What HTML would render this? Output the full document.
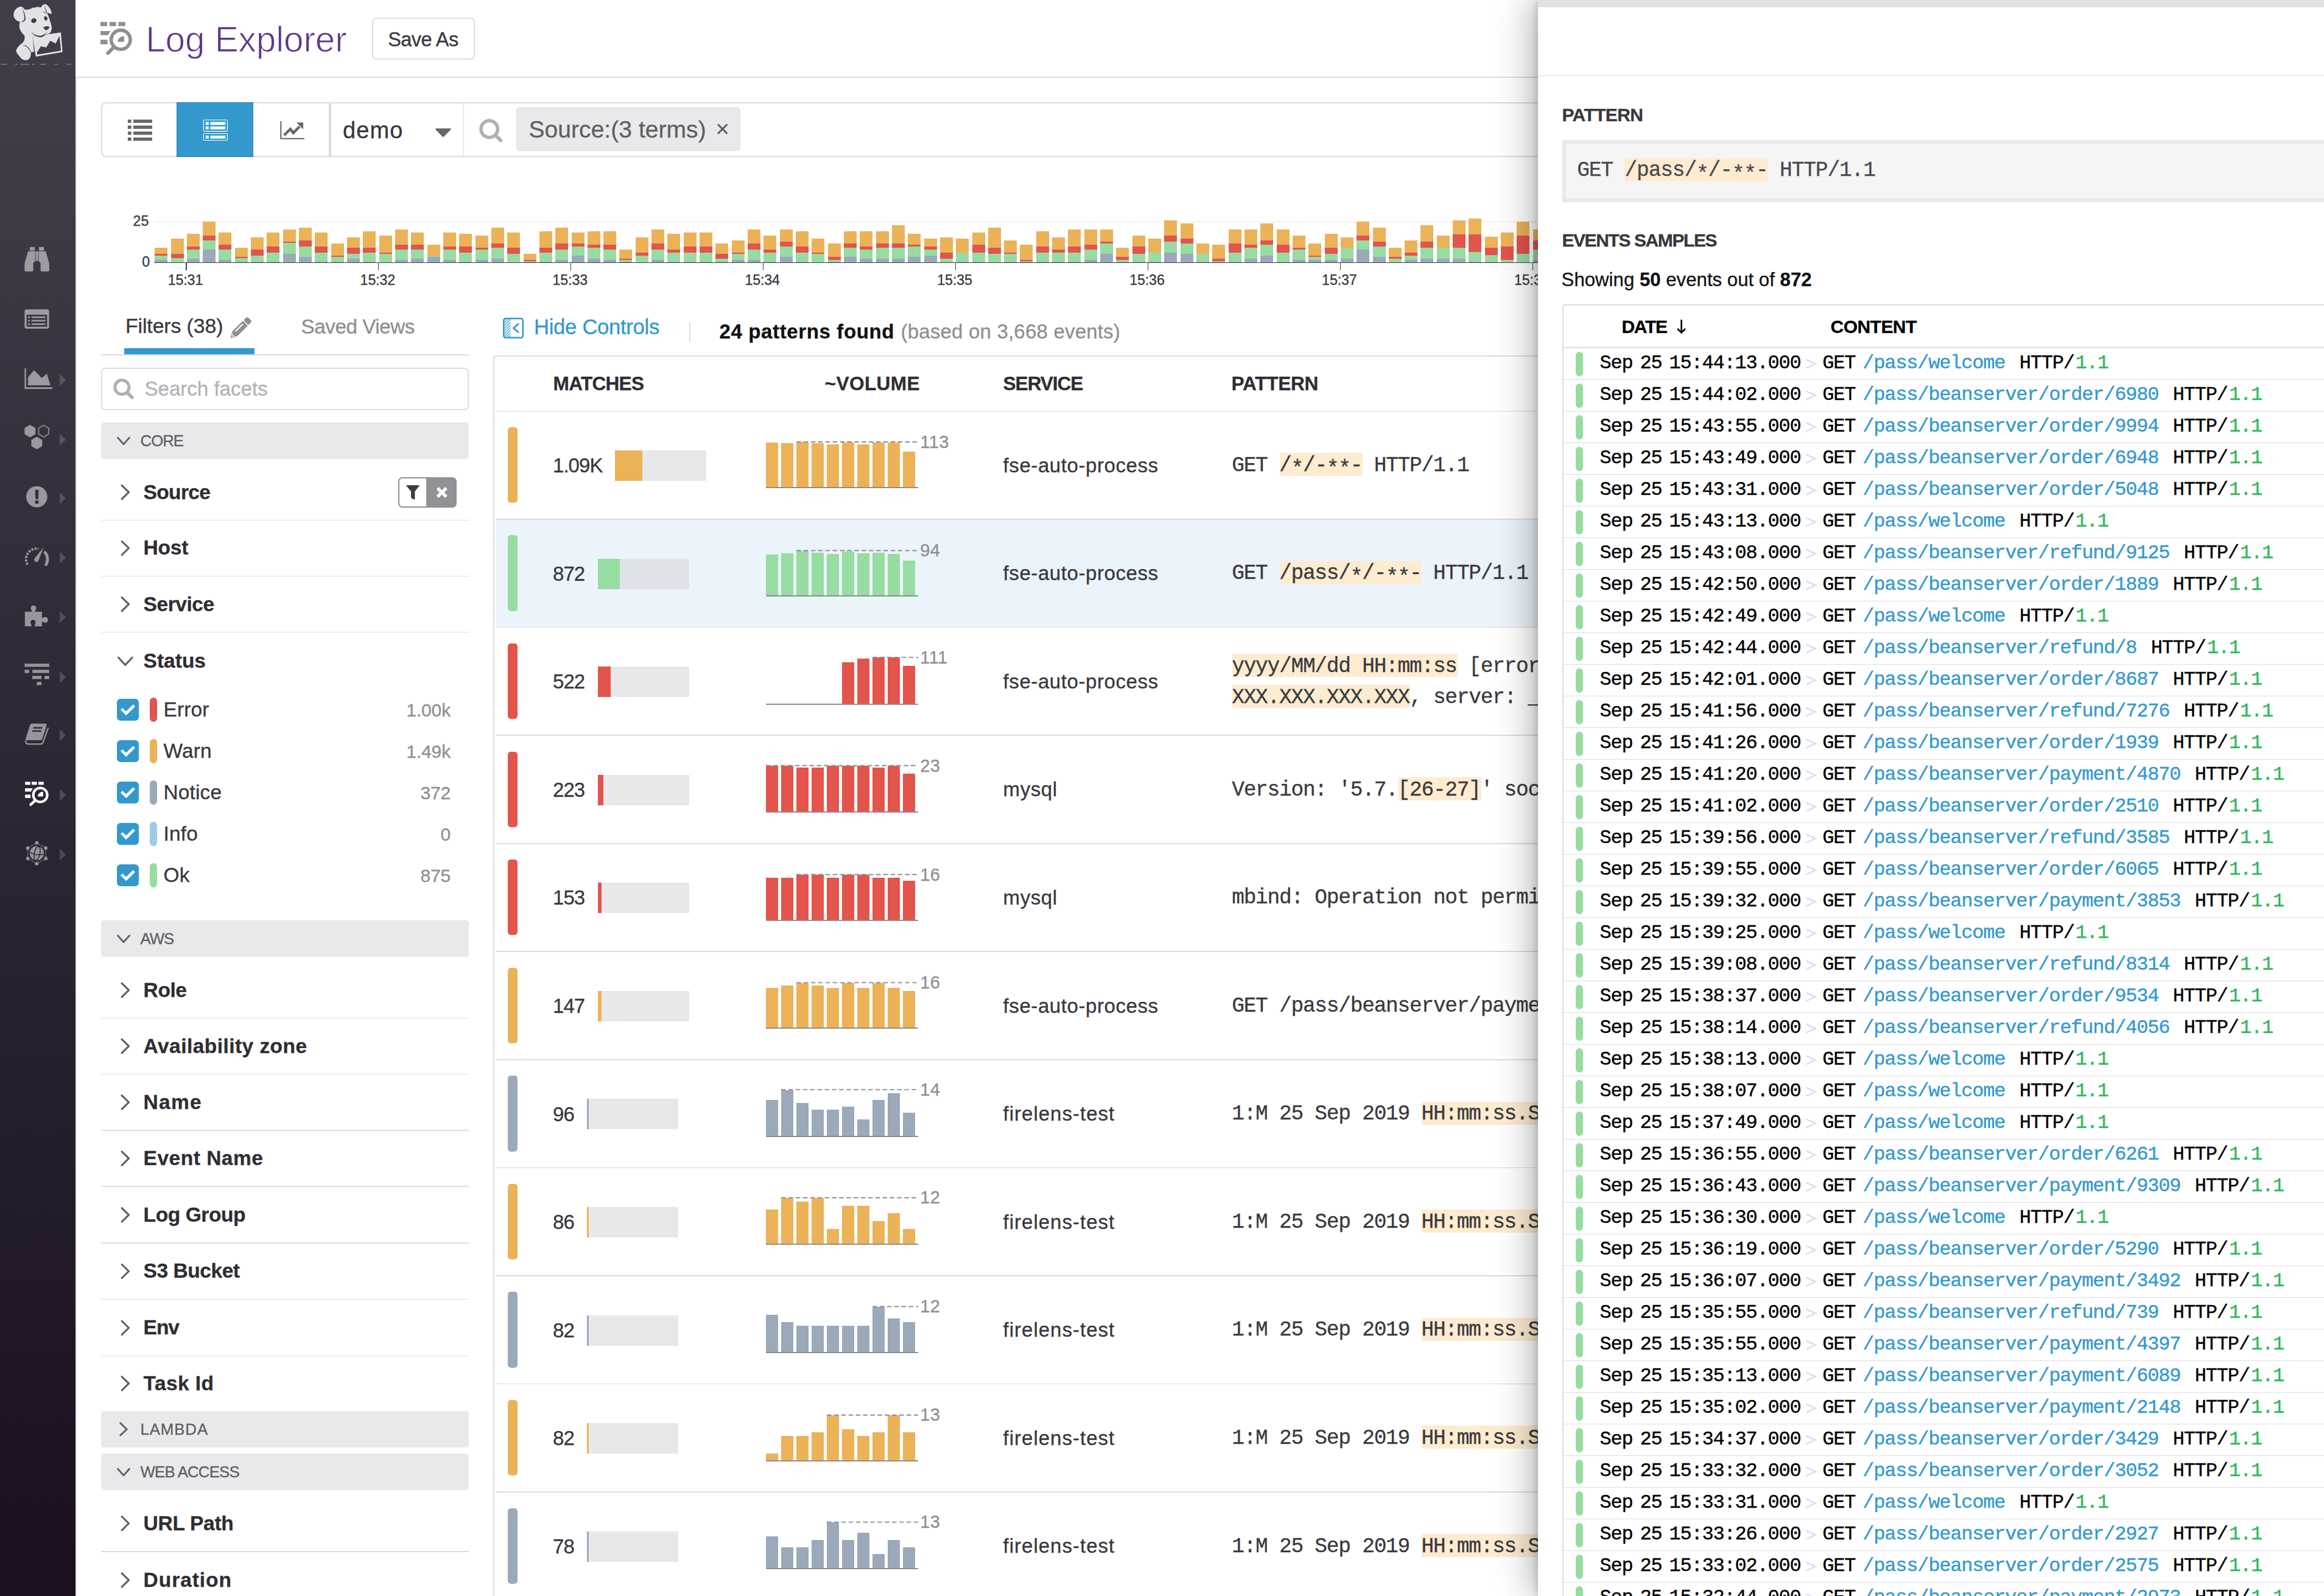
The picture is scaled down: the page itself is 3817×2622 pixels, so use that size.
<!DOCTYPE html>
<html><head><meta charset="utf-8"><title>Log Explorer</title>
<style>
html,body{margin:0;padding:0;}
body{width:3817px;height:2622px;background:#fff;font-family:"Liberation Sans",sans-serif;overflow:hidden;}
#root{position:relative;width:3817px;height:2622px;overflow:hidden;background:#fff;}
.a{position:absolute;box-sizing:border-box;}
.t{position:absolute;white-space:pre;line-height:1;}
.s{font-family:"Liberation Sans",sans-serif;-webkit-text-stroke:0.3px;}
.m{font-family:"Liberation Mono",monospace;}
svg{position:absolute;overflow:visible;}
.hl{background:#fdecd0;}
</style></head><body><div id="root">
<div class="a" style="left:0.00px;top:0.00px;width:124.00px;height:2622.00px;background:linear-gradient(180deg,#433d4a 0%,#3e3744 15%,#352d3b 34%,#2c2332 56%,#231a2a 76%,#1b0f20 100%);"></div>
<svg style="left:0;top:0" width="124" height="130" viewBox="0 0 1200.7 1258.8">
<g fill="#e2e1e4">
<path d="M330 105 C270 112 215 170 215 240 C218 290 262 338 318 347 C306 385 302 425 318 470 C332 512 365 540 388 562 C398 600 392 640 368 672 C330 700 280 742 260 792 C246 832 290 868 320 908 C340 950 400 966 442 952 C482 932 496 882 490 832 L542 822 L516 582 L600 572 C650 588 700 575 745 545 C790 540 818 505 824 452 C822 400 800 340 776 270 L748 205 C770 200 790 222 812 222 C826 215 822 195 812 170 C790 115 750 68 712 62 C680 70 664 100 650 118 C610 108 570 112 545 125 L520 118 L500 135 C460 150 420 160 392 150 C378 128 356 108 330 105 Z"/>
<path d="M515 580 L968 515 L995 828 L570 900 Z"/>
</g>
<g fill="#423c49">
<path d="M590 868 L588 835 L650 735 L735 755 L800 648 L885 692 L945 572 L970 806 Z"/>
<ellipse cx="538" cy="328" rx="43" ry="37" transform="rotate(-22 538 328)"/>
<ellipse cx="728" cy="292" rx="26" ry="34" transform="rotate(-14 728 292)"/>
<path d="M690 436 C705 420 765 412 786 430 C780 455 765 472 735 479 C715 475 697 458 690 436 Z"/>
<path d="M494 498 C530 548 600 575 655 566 C700 555 730 535 748 508 C735 545 700 585 650 592 C590 590 525 560 494 498 Z"/>
<path d="M350 120 C385 180 412 260 405 310 C395 340 365 352 330 350 C365 340 388 315 388 285 C385 230 370 170 350 120 Z"/>
<path d="M704 78 C722 120 738 165 746 196 L735 200 C725 160 712 115 704 78 Z"/>
<path d="M668 178 C690 190 715 205 735 215 L738 205 C715 195 690 182 668 178Z"/>
<path d="M352 712 C420 715 475 760 492 830 L484 832 C465 770 415 728 352 712 Z"/>
<path d="M516 582 L542 822 L530 824 L504 584 Z" opacity="0.0"/>
</g>
</svg>
<div class="a" style="left:2.00px;top:105.00px;width:10.40px;height:1.10px;background:rgba(255,255,255,0.45);"></div>
<div class="a" style="left:24.80px;top:105.00px;width:4.10px;height:1.10px;background:rgba(255,255,255,0.45);"></div>
<div class="a" style="left:34.00px;top:105.00px;width:14.00px;height:1.10px;background:rgba(255,255,255,0.45);"></div>
<div class="a" style="left:53.20px;top:105.00px;width:3.60px;height:1.10px;background:rgba(255,255,255,0.45);"></div>
<div class="a" style="left:66.00px;top:105.00px;width:10.40px;height:1.10px;background:rgba(255,255,255,0.45);"></div>
<div class="a" style="left:89.80px;top:105.00px;width:5.70px;height:1.10px;background:rgba(255,255,255,0.45);"></div>
<div class="a" style="left:109.50px;top:105.00px;width:7.20px;height:1.10px;background:rgba(255,255,255,0.45);"></div>
<svg style="left:0;top:0" width="124" height="1500" viewBox="0 0 124 1500"><g fill="#fff" opacity="0.5"><rect x="49" y="405.8" width="8.2" height="5.9"/><rect x="64" y="405.8" width="8.2" height="5.9"/>
<path d="M46.1 412.8H57.8V428.8L54.6 432.4V444.2Q54.6 446 52.6 446H42.2Q40.3 446 40.3 444.2V433Z"/>
<path d="M75.1 412.8H63.4V428.8L66.6 432.4V444.2Q66.6 446 68.6 446H79Q80.9 446 80.9 444.2V433Z"/>
<rect x="58.6" y="412.8" width="4" height="15.8"/></g><g fill="#fff" opacity="0.5"><path fill-rule="evenodd" d="M43.4 508.2H77.6Q80.6 508.2 80.6 511.2V537Q80.6 540 77.6 540H43.4Q40.4 540 40.4 537V511.2Q40.4 508.2 43.4 508.2ZM43.7 516.9V536.8H77.3V516.9Z"/>
<rect x="46" y="519.8" width="3" height="2.7"/><rect x="51.8" y="519.8" width="22.8" height="2.7"/><rect x="46" y="525.5" width="3" height="2.7"/><rect x="51.8" y="525.5" width="22.8" height="2.7"/><rect x="46" y="531.2" width="3" height="2.7"/><rect x="51.8" y="531.2" width="22.8" height="2.7"/></g><g fill="#fff" opacity="0.5"><path d="M40.4 605.2H42.8V636.2H86V639H40.4Z"/><path d="M46.1 632.9V619.8L55.9 608.1L68.6 621.1L77 614.1L82.8 632.9Z"/></g><path d="M98.2 614.5999999999999L108 624.3L98.2 634.0Z" fill="#fff" opacity="0.17"/><g opacity="0.5"><polygon fill="#fff" points="49.30,697.90 58.22,703.05 58.22,713.35 49.30,718.50 40.38,713.35 40.38,703.05"/><polygon fill="#fff" points="60.40,717.50 69.32,722.65 69.32,732.95 60.40,738.10 51.48,732.95 51.48,722.65"/><polygon fill="none" stroke="#fff" stroke-width="1.5" points="71.80,698.60 80.11,703.40 80.11,713.00 71.80,717.80 63.49,713.00 63.49,703.40"/></g><path d="M98.2 712.5L108 722.2L98.2 731.9000000000001Z" fill="#fff" opacity="0.17"/><g fill="#fff" opacity="0.5"><path fill-rule="evenodd" d="M60.4 798.7A17.4 17.4 0 1 0 60.4 833.5A17.4 17.4 0 1 0 60.4 798.7ZM57.7 804.7H63.5L62.9 819.9H58.3ZM57.8 822.3H63.4V827.5H57.8Z"/></g><path d="M98.2 808.6999999999999L108 818.4L98.2 828.1Z" fill="#fff" opacity="0.17"/><g opacity="0.5" fill="none" stroke="#fff"><path d="M45.16 927.60A17.6 17.6 0 0 1 63.46 901.47" stroke-width="3.8" stroke-dasharray="3.6 1.9"/>
<path d="M73.88 907.49A17.6 17.6 0 0 1 75.64 927.60" stroke-width="4.8" stroke-linecap="round"/>
<path d="M71.6 899 L63.4 920.6 A3.7 3.7 0 1 1 57 917.2 Z" fill="#fff" stroke="none"/></g><path d="M98.2 906.5L108 916.2L98.2 925.9000000000001Z" fill="#fff" opacity="0.17"/><g fill="#fff" opacity="0.5"><path fill-rule="evenodd" d="M40.9 1005H52.2Q53.2 1004.2 52 1002.6A4.5 4.5 0 1 1 58 1002.6Q56.8 1004.2 57.8 1005H68.9V1014.6Q69.8 1015.8 71.6 1014.6A4.6 4.6 0 1 1 71.6 1022.2Q69.8 1021 68.9 1022.2V1029H57.2V1025.6A4.2 4.2 0 1 0 51.4 1025.6V1029H40.9Z"/></g><path d="M98.2 1004.3L108 1014L98.2 1023.7Z" fill="#fff" opacity="0.17"/><g fill="#fff" opacity="0.5"><rect x="40.4" y="1090.3" width="40.4" height="5.2"/><rect x="40.4" y="1100.4" width="7.6" height="5.2"/><rect x="53.1" y="1100.4" width="27.7" height="5.2"/><rect x="53.1" y="1110.3" width="15" height="5.3"/><rect x="73" y="1110.3" width="7.8" height="5.3"/><rect x="60.4" y="1120.3" width="7.7" height="5.4"/></g><path d="M98.2 1102.7L108 1112.4L98.2 1122.1000000000001Z" fill="#fff" opacity="0.17"/><g opacity="0.5"><path fill="#fff" fill-rule="evenodd" d="M52.6 1188.7H74.2Q77.2 1188.9 76.4 1192L69.6 1214Q68.9 1216.1 66.6 1216.1H44.4Q41.4 1216 42.3 1213L49.4 1191Q50.2 1188.7 52.6 1188.7ZM55 1194.6L54.3 1197H69L69.7 1194.6ZM53.4 1199.8L52.7 1202.2H67.4L68.1 1199.8Z"/>
<path fill="none" stroke="#fff" stroke-width="2.3" stroke-linecap="round" d="M42.4 1217Q41.8 1222.4 46.4 1222.4H66.6Q69.6 1222.4 70.6 1219.6L79 1196.4"/></g><path d="M98.2 1198.3L108 1208L98.2 1217.7Z" fill="#fff" opacity="0.17"/><g fill="#fff"><rect x="41.2" y="1284.4" width="8.6" height="4.9"/><rect x="52.1" y="1284.4" width="8.6" height="4.9"/><rect x="63.2" y="1284.4" width="8.6" height="4.9"/>
<path d="M41.2 1295H53.8L50.8 1300.4H41.2Z"/><path d="M41.2 1305.6H49.9L50.4 1310.9H41.2Z"/>
<path d="M70.8 1308.6V1300.8A8.4 7.8 0 0 0 62 1308.6Z"/></g>
<circle cx="66.1" cy="1306" r="11.5" fill="none" stroke="#fff" stroke-width="4.2"/>
<path d="M57 1315.8L50.4 1321.8" stroke="#fff" stroke-width="4.4" stroke-linecap="round"/><path d="M98.2 1296.3L108 1306L98.2 1315.7Z" fill="#fff" opacity="0.17"/><g opacity="0.5"><polygon points="60.40,1384.70 75.21,1393.25 75.21,1410.35 60.40,1418.90 45.59,1410.35 45.59,1393.25" fill="none" stroke="#fff" stroke-width="1.2" stroke-dasharray="2.6 1.6"/><circle cx="60.40" cy="1384.70" r="2.9" fill="#fff"/><circle cx="75.21" cy="1393.25" r="2.9" fill="#fff"/><circle cx="75.21" cy="1410.35" r="2.9" fill="#fff"/><circle cx="60.40" cy="1418.90" r="2.9" fill="#fff"/><circle cx="45.59" cy="1410.35" r="2.9" fill="#fff"/><circle cx="45.59" cy="1393.25" r="2.9" fill="#fff"/><circle cx="60.4" cy="1401.8" r="11.7" fill="#fff"/></g><g fill="none" stroke="#2b2532" stroke-width="1.5"><ellipse cx="61.0" cy="1401.8" rx="4.6" ry="11.7" transform="rotate(12 60.4 1401.8)"/><path d="M48.9 1400.3Q60.4 1406.3 71.9 1403.3"/></g><path d="M98.2 1394.3L108 1404L98.2 1413.7Z" fill="#fff" opacity="0.17"/></svg>
<div class="a" style="left:124.00px;top:128.00px;width:1.80px;height:2622.00px;background:#e2e1e6;"></div>
<div class="a" style="left:124.00px;top:126.00px;width:3693.00px;height:2.00px;background:#dcdbe0;"></div>
<svg style="left:0;top:0" width="240" height="130" viewBox="0 0 240 130">
<g fill="#908e93">
<rect x="165" y="36.1" width="10.9" height="6.8"/><rect x="180" y="36.1" width="10.7" height="6.8"/><rect x="194.5" y="36.1" width="11.2" height="6.8"/>
<path d="M165 50.9H181.5L177.6 57.8H165Z"/>
<path d="M165 65.3H176.3L176.9 72.8H165Z"/>
<path d="M204 68.7V59.9A9.3 8.8 0 0 0 193.2 68.7Z"/>
</g>
<circle cx="198.3" cy="65.3" r="15.7" fill="none" stroke="#908e93" stroke-width="5.6"/>
<path d="M186.2 78.2L177.2 87.2" stroke="#908e93" stroke-width="5.8" stroke-linecap="round" fill="none"/>
</svg>
<div class="t s" style="left:239.20px;top:36.37px;font-size:58.5px;color:#5f3889;letter-spacing:-0.1px;-webkit-text-stroke:1.1px #fff;">Log Explorer</div>
<div class="a" style="left:610.5px;top:28.5px;width:169px;height:69px;border:2px solid #dcdbe0;border-radius:7px;background:#fff"></div>
<div class="t s" style="left:637.20px;top:48.67px;font-size:32.5px;color:#38363c;letter-spacing:-0.55px;">Save As</div>
<div class="a" style="left:166px;top:168px;width:2500px;height:90px;border:2px solid #dcdbe0;border-radius:8px;background:#fff"></div>
<div class="a" style="left:290px;top:168px;width:126px;height:90px;background:#3399cc;border:1.5px solid #2a80ad"></div>
<div class="a" style="left:540.30px;top:170.00px;width:3.60px;height:86.00px;background:#dcdbe0;"></div>
<div class="a" style="left:760.50px;top:170.00px;width:1.20px;height:86.00px;background:#dcdbe0;"></div>
<svg style="left:0;top:0" width="600" height="300" viewBox="0 0 600 300"><g fill="#666568"><rect x="209.9" y="196.5" width="5.8" height="5.4"/><rect x="219" y="196.5" width="30.9" height="5.4"/><rect x="209.9" y="206.3" width="5.8" height="5.4"/><rect x="219" y="206.3" width="30.9" height="5.4"/><rect x="209.9" y="216.1" width="5.8" height="5.4"/><rect x="219" y="216.1" width="30.9" height="5.4"/><rect x="209.9" y="225.9" width="5.8" height="5.4"/><rect x="219" y="225.9" width="30.9" height="5.4"/></g><g fill="none" stroke="#fff" stroke-width="1.1"><rect x="334.3" y="197" width="39.2" height="18.6" rx="1.6"/><rect x="334.3" y="219.5" width="39.2" height="11" rx="1.6"/></g><g fill="#fff"><rect x="337.8" y="200.4" width="5" height="4.8"/><rect x="345.4" y="200.4" width="24.9" height="4.8"/><rect x="337.8" y="207.7" width="5" height="4.8"/><rect x="345.4" y="207.7" width="24.9" height="4.8"/><rect x="337.8" y="222.8" width="5" height="4.8"/><rect x="345.4" y="222.8" width="24.9" height="4.8"/></g><path d="M461.3 199V227.8H500" fill="none" stroke="#666568" stroke-width="2.1"/><path d="M466.6 222.2L476.9 212L481.6 218.4L492 208" fill="none" stroke="#666568" stroke-width="4.4"/><path d="M486.8 201.3H498V212.4Z" fill="#666568"/><path d="M716.2 211H739.6Q741.4 211.4 740 213.2L729.4 224.2Q727.9 225.5 726.4 224.2L715.8 213.2Q714.6 211.4 716.2 211Z" fill="#666568"/><circle cx="803.7" cy="212" r="13.7" fill="none" stroke="#b1afb5" stroke-width="5.5"/><path d="M813.8 222.3L822.3 230.6" stroke="#b1afb5" stroke-width="5.8" stroke-linecap="round"/></svg>
<div class="t s" style="left:563.00px;top:195.30px;font-size:38px;color:#38363c;letter-spacing:1.1px;">demo</div>
<div class="a" style="left:848px;top:176px;width:368px;height:71.5px;background:#e9e9ec;border:1.5px solid #dddce1;border-radius:5px"></div>
<div class="t s" style="left:868.50px;top:192.85px;font-size:39px;color:#605e63;letter-spacing:0.05px;">Source:(3 terms)</div>
<svg style="left:0;top:0" width="1300" height="300" viewBox="0 0 1300 300"><path d="M1179 204.2L1194.4 219.6M1194.4 204.2L1179 219.6" stroke="#605e63" stroke-width="3" fill="none"/></svg>
<div class="a" style="left:253.00px;top:363.50px;width:2400.00px;height:1.50px;background:#e6e5e9;"></div>
<svg style="left:0;top:0" width="2700" height="500" viewBox="0 0 2700 500" shape-rendering="crispEdges"><rect x="254.20" y="427.07" width="21.0" height="4.13" fill="#9aaabb"/><rect x="254.20" y="419.58" width="21.0" height="7.49" fill="#97dca0"/><rect x="254.20" y="417.00" width="21.0" height="2.58" fill="#e2544c"/><rect x="254.20" y="407.19" width="21.0" height="9.81" fill="#ecb258"/><rect x="280.52" y="430.68" width="21.0" height="0.52" fill="#9aaabb"/><rect x="280.52" y="424.49" width="21.0" height="6.20" fill="#97dca0"/><rect x="280.52" y="417.00" width="21.0" height="7.49" fill="#e2544c"/><rect x="280.52" y="392.22" width="21.0" height="24.79" fill="#ecb258"/><rect x="306.84" y="424.75" width="21.0" height="6.45" fill="#9aaabb"/><rect x="306.84" y="409.51" width="21.0" height="15.23" fill="#97dca0"/><rect x="306.84" y="404.61" width="21.0" height="4.91" fill="#e2544c"/><rect x="306.84" y="384.47" width="21.0" height="20.14" fill="#ecb258"/><rect x="333.16" y="409.77" width="21.0" height="21.43" fill="#9aaabb"/><rect x="333.16" y="394.54" width="21.0" height="15.23" fill="#97dca0"/><rect x="333.16" y="387.05" width="21.0" height="7.49" fill="#e2544c"/><rect x="333.16" y="364.33" width="21.0" height="22.72" fill="#ecb258"/><rect x="359.48" y="427.07" width="21.0" height="4.13" fill="#9aaabb"/><rect x="359.48" y="409.51" width="21.0" height="17.56" fill="#97dca0"/><rect x="359.48" y="402.03" width="21.0" height="7.49" fill="#e2544c"/><rect x="359.48" y="382.15" width="21.0" height="19.88" fill="#ecb258"/><rect x="385.80" y="429.91" width="21.0" height="1.29" fill="#9aaabb"/><rect x="385.80" y="424.49" width="21.0" height="5.42" fill="#97dca0"/><rect x="385.80" y="422.16" width="21.0" height="2.32" fill="#e2544c"/><rect x="385.80" y="407.19" width="21.0" height="14.97" fill="#ecb258"/><rect x="412.12" y="429.91" width="21.0" height="1.29" fill="#9aaabb"/><rect x="412.12" y="419.58" width="21.0" height="10.33" fill="#97dca0"/><rect x="412.12" y="409.77" width="21.0" height="9.81" fill="#e2544c"/><rect x="412.12" y="389.63" width="21.0" height="20.14" fill="#ecb258"/><rect x="438.44" y="429.91" width="21.0" height="1.29" fill="#9aaabb"/><rect x="438.44" y="414.68" width="21.0" height="15.23" fill="#97dca0"/><rect x="438.44" y="404.61" width="21.0" height="10.07" fill="#e2544c"/><rect x="438.44" y="382.15" width="21.0" height="22.46" fill="#ecb258"/><rect x="464.76" y="417.00" width="21.0" height="14.20" fill="#9aaabb"/><rect x="464.76" y="399.44" width="21.0" height="17.56" fill="#97dca0"/><rect x="464.76" y="397.12" width="21.0" height="2.32" fill="#e2544c"/><rect x="464.76" y="376.98" width="21.0" height="20.14" fill="#ecb258"/><rect x="491.08" y="422.16" width="21.0" height="9.04" fill="#9aaabb"/><rect x="491.08" y="404.61" width="21.0" height="17.56" fill="#97dca0"/><rect x="491.08" y="394.54" width="21.0" height="10.07" fill="#e2544c"/><rect x="491.08" y="374.40" width="21.0" height="20.14" fill="#ecb258"/><rect x="517.40" y="429.91" width="21.0" height="1.29" fill="#9aaabb"/><rect x="517.40" y="414.68" width="21.0" height="15.23" fill="#97dca0"/><rect x="517.40" y="404.61" width="21.0" height="10.07" fill="#e2544c"/><rect x="517.40" y="382.15" width="21.0" height="22.46" fill="#ecb258"/><rect x="543.72" y="429.91" width="21.0" height="1.29" fill="#9aaabb"/><rect x="543.72" y="422.16" width="21.0" height="7.75" fill="#97dca0"/><rect x="543.72" y="419.84" width="21.0" height="2.32" fill="#e2544c"/><rect x="543.72" y="399.70" width="21.0" height="20.14" fill="#ecb258"/><rect x="570.04" y="424.75" width="21.0" height="6.45" fill="#9aaabb"/><rect x="570.04" y="417.00" width="21.0" height="7.75" fill="#97dca0"/><rect x="570.04" y="407.19" width="21.0" height="9.81" fill="#e2544c"/><rect x="570.04" y="389.63" width="21.0" height="17.56" fill="#ecb258"/><rect x="596.36" y="429.91" width="21.0" height="1.29" fill="#9aaabb"/><rect x="596.36" y="414.68" width="21.0" height="15.23" fill="#97dca0"/><rect x="596.36" y="407.19" width="21.0" height="7.49" fill="#e2544c"/><rect x="596.36" y="379.56" width="21.0" height="27.63" fill="#ecb258"/><rect x="622.68" y="430.68" width="21.0" height="0.52" fill="#9aaabb"/><rect x="622.68" y="417.00" width="21.0" height="13.68" fill="#97dca0"/><rect x="622.68" y="414.68" width="21.0" height="2.32" fill="#e2544c"/><rect x="622.68" y="387.05" width="21.0" height="27.63" fill="#ecb258"/><rect x="649.00" y="427.07" width="21.0" height="4.13" fill="#9aaabb"/><rect x="649.00" y="409.51" width="21.0" height="17.56" fill="#97dca0"/><rect x="649.00" y="402.03" width="21.0" height="7.49" fill="#e2544c"/><rect x="649.00" y="376.98" width="21.0" height="25.04" fill="#ecb258"/><rect x="675.32" y="424.75" width="21.0" height="6.45" fill="#9aaabb"/><rect x="675.32" y="409.51" width="21.0" height="15.23" fill="#97dca0"/><rect x="675.32" y="402.03" width="21.0" height="7.49" fill="#e2544c"/><rect x="675.32" y="382.15" width="21.0" height="19.88" fill="#ecb258"/><rect x="701.64" y="422.16" width="21.0" height="9.04" fill="#9aaabb"/><rect x="701.64" y="419.84" width="21.0" height="2.32" fill="#97dca0"/><rect x="701.64" y="402.03" width="21.0" height="17.81" fill="#ecb258"/><rect x="727.96" y="427.07" width="21.0" height="4.13" fill="#9aaabb"/><rect x="727.96" y="409.51" width="21.0" height="17.56" fill="#97dca0"/><rect x="727.96" y="404.61" width="21.0" height="4.91" fill="#e2544c"/><rect x="727.96" y="382.15" width="21.0" height="22.46" fill="#ecb258"/><rect x="754.28" y="429.91" width="21.0" height="1.29" fill="#9aaabb"/><rect x="754.28" y="414.68" width="21.0" height="15.23" fill="#97dca0"/><rect x="754.28" y="404.61" width="21.0" height="10.07" fill="#e2544c"/><rect x="754.28" y="384.47" width="21.0" height="20.14" fill="#ecb258"/><rect x="780.60" y="427.07" width="21.0" height="4.13" fill="#9aaabb"/><rect x="780.60" y="409.51" width="21.0" height="17.56" fill="#97dca0"/><rect x="780.60" y="407.19" width="21.0" height="2.32" fill="#e2544c"/><rect x="780.60" y="387.05" width="21.0" height="20.14" fill="#ecb258"/><rect x="806.92" y="424.75" width="21.0" height="6.45" fill="#9aaabb"/><rect x="806.92" y="407.19" width="21.0" height="17.56" fill="#97dca0"/><rect x="806.92" y="399.70" width="21.0" height="7.49" fill="#e2544c"/><rect x="806.92" y="374.40" width="21.0" height="25.30" fill="#ecb258"/><rect x="833.24" y="417.00" width="21.0" height="14.20" fill="#97dca0"/><rect x="833.24" y="407.19" width="21.0" height="9.81" fill="#e2544c"/><rect x="833.24" y="382.15" width="21.0" height="25.04" fill="#ecb258"/><rect x="859.56" y="429.91" width="21.0" height="1.29" fill="#9aaabb"/><rect x="859.56" y="429.39" width="21.0" height="0.52" fill="#97dca0"/><rect x="859.56" y="427.07" width="21.0" height="2.32" fill="#e2544c"/><rect x="859.56" y="417.00" width="21.0" height="10.07" fill="#ecb258"/><rect x="885.88" y="429.91" width="21.0" height="1.29" fill="#9aaabb"/><rect x="885.88" y="414.68" width="21.0" height="15.23" fill="#97dca0"/><rect x="885.88" y="407.19" width="21.0" height="7.49" fill="#e2544c"/><rect x="885.88" y="379.56" width="21.0" height="27.63" fill="#ecb258"/><rect x="912.20" y="427.07" width="21.0" height="4.13" fill="#9aaabb"/><rect x="912.20" y="409.51" width="21.0" height="17.56" fill="#97dca0"/><rect x="912.20" y="399.70" width="21.0" height="9.81" fill="#e2544c"/><rect x="912.20" y="374.40" width="21.0" height="25.30" fill="#ecb258"/><rect x="938.52" y="419.84" width="21.0" height="11.36" fill="#9aaabb"/><rect x="938.52" y="404.61" width="21.0" height="15.23" fill="#97dca0"/><rect x="938.52" y="399.70" width="21.0" height="4.91" fill="#e2544c"/><rect x="938.52" y="382.15" width="21.0" height="17.56" fill="#ecb258"/><rect x="964.84" y="424.75" width="21.0" height="6.45" fill="#9aaabb"/><rect x="964.84" y="407.19" width="21.0" height="17.56" fill="#97dca0"/><rect x="964.84" y="402.03" width="21.0" height="5.16" fill="#e2544c"/><rect x="964.84" y="379.56" width="21.0" height="22.46" fill="#ecb258"/><rect x="991.16" y="427.07" width="21.0" height="4.13" fill="#9aaabb"/><rect x="991.16" y="409.51" width="21.0" height="17.56" fill="#97dca0"/><rect x="991.16" y="402.03" width="21.0" height="7.49" fill="#e2544c"/><rect x="991.16" y="379.56" width="21.0" height="22.46" fill="#ecb258"/><rect x="1017.48" y="429.91" width="21.0" height="1.29" fill="#9aaabb"/><rect x="1017.48" y="427.07" width="21.0" height="2.84" fill="#97dca0"/><rect x="1017.48" y="424.75" width="21.0" height="2.32" fill="#e2544c"/><rect x="1017.48" y="409.51" width="21.0" height="15.23" fill="#ecb258"/><rect x="1043.80" y="419.58" width="21.0" height="11.62" fill="#97dca0"/><rect x="1043.80" y="414.93" width="21.0" height="4.65" fill="#e2544c"/><rect x="1043.80" y="389.63" width="21.0" height="25.30" fill="#ecb258"/><rect x="1070.12" y="427.07" width="21.0" height="4.13" fill="#9aaabb"/><rect x="1070.12" y="409.51" width="21.0" height="17.56" fill="#97dca0"/><rect x="1070.12" y="399.70" width="21.0" height="9.81" fill="#e2544c"/><rect x="1070.12" y="376.98" width="21.0" height="22.72" fill="#ecb258"/><rect x="1096.44" y="429.91" width="21.0" height="1.29" fill="#9aaabb"/><rect x="1096.44" y="414.68" width="21.0" height="15.23" fill="#97dca0"/><rect x="1096.44" y="409.77" width="21.0" height="4.91" fill="#e2544c"/><rect x="1096.44" y="384.47" width="21.0" height="25.30" fill="#ecb258"/><rect x="1122.76" y="429.91" width="21.0" height="1.29" fill="#9aaabb"/><rect x="1122.76" y="414.68" width="21.0" height="15.23" fill="#97dca0"/><rect x="1122.76" y="404.61" width="21.0" height="10.07" fill="#e2544c"/><rect x="1122.76" y="382.15" width="21.0" height="22.46" fill="#ecb258"/><rect x="1149.08" y="429.91" width="21.0" height="1.29" fill="#9aaabb"/><rect x="1149.08" y="414.68" width="21.0" height="15.23" fill="#97dca0"/><rect x="1149.08" y="404.61" width="21.0" height="10.07" fill="#e2544c"/><rect x="1149.08" y="382.15" width="21.0" height="22.46" fill="#ecb258"/><rect x="1175.40" y="429.91" width="21.0" height="1.29" fill="#9aaabb"/><rect x="1175.40" y="424.75" width="21.0" height="5.16" fill="#97dca0"/><rect x="1175.40" y="417.00" width="21.0" height="7.75" fill="#e2544c"/><rect x="1175.40" y="399.70" width="21.0" height="17.30" fill="#ecb258"/><rect x="1201.72" y="427.07" width="21.0" height="4.13" fill="#9aaabb"/><rect x="1201.72" y="417.00" width="21.0" height="10.07" fill="#97dca0"/><rect x="1201.72" y="414.93" width="21.0" height="2.07" fill="#e2544c"/><rect x="1201.72" y="394.54" width="21.0" height="20.40" fill="#ecb258"/><rect x="1228.04" y="427.07" width="21.0" height="4.13" fill="#9aaabb"/><rect x="1228.04" y="409.51" width="21.0" height="17.56" fill="#97dca0"/><rect x="1228.04" y="399.70" width="21.0" height="9.81" fill="#e2544c"/><rect x="1228.04" y="376.98" width="21.0" height="22.72" fill="#ecb258"/><rect x="1254.36" y="429.91" width="21.0" height="1.29" fill="#9aaabb"/><rect x="1254.36" y="414.68" width="21.0" height="15.23" fill="#97dca0"/><rect x="1254.36" y="409.77" width="21.0" height="4.91" fill="#e2544c"/><rect x="1254.36" y="387.05" width="21.0" height="22.72" fill="#ecb258"/><rect x="1280.68" y="422.16" width="21.0" height="9.04" fill="#9aaabb"/><rect x="1280.68" y="404.61" width="21.0" height="17.56" fill="#97dca0"/><rect x="1280.68" y="397.12" width="21.0" height="7.49" fill="#e2544c"/><rect x="1280.68" y="376.98" width="21.0" height="20.14" fill="#ecb258"/><rect x="1307.00" y="429.91" width="21.0" height="1.29" fill="#9aaabb"/><rect x="1307.00" y="414.68" width="21.0" height="15.23" fill="#97dca0"/><rect x="1307.00" y="404.61" width="21.0" height="10.07" fill="#e2544c"/><rect x="1307.00" y="379.56" width="21.0" height="25.04" fill="#ecb258"/><rect x="1333.32" y="417.00" width="21.0" height="14.20" fill="#97dca0"/><rect x="1333.32" y="414.93" width="21.0" height="2.07" fill="#e2544c"/><rect x="1333.32" y="392.22" width="21.0" height="22.72" fill="#ecb258"/><rect x="1359.64" y="429.91" width="21.0" height="1.29" fill="#9aaabb"/><rect x="1359.64" y="427.07" width="21.0" height="2.84" fill="#97dca0"/><rect x="1359.64" y="422.16" width="21.0" height="4.91" fill="#e2544c"/><rect x="1359.64" y="399.70" width="21.0" height="22.46" fill="#ecb258"/><rect x="1385.96" y="422.16" width="21.0" height="9.04" fill="#9aaabb"/><rect x="1385.96" y="407.19" width="21.0" height="14.97" fill="#97dca0"/><rect x="1385.96" y="399.70" width="21.0" height="7.49" fill="#e2544c"/><rect x="1385.96" y="379.56" width="21.0" height="20.14" fill="#ecb258"/><rect x="1412.28" y="424.75" width="21.0" height="6.45" fill="#9aaabb"/><rect x="1412.28" y="409.51" width="21.0" height="15.23" fill="#97dca0"/><rect x="1412.28" y="404.61" width="21.0" height="4.91" fill="#e2544c"/><rect x="1412.28" y="379.56" width="21.0" height="25.04" fill="#ecb258"/><rect x="1438.60" y="424.75" width="21.0" height="6.45" fill="#9aaabb"/><rect x="1438.60" y="407.19" width="21.0" height="17.56" fill="#97dca0"/><rect x="1438.60" y="399.70" width="21.0" height="7.49" fill="#e2544c"/><rect x="1438.60" y="379.56" width="21.0" height="20.14" fill="#ecb258"/><rect x="1464.92" y="424.75" width="21.0" height="6.45" fill="#9aaabb"/><rect x="1464.92" y="407.19" width="21.0" height="17.56" fill="#97dca0"/><rect x="1464.92" y="399.70" width="21.0" height="7.49" fill="#e2544c"/><rect x="1464.92" y="369.50" width="21.0" height="30.21" fill="#ecb258"/><rect x="1491.24" y="422.16" width="21.0" height="9.04" fill="#9aaabb"/><rect x="1491.24" y="404.61" width="21.0" height="17.56" fill="#97dca0"/><rect x="1491.24" y="402.03" width="21.0" height="2.58" fill="#e2544c"/><rect x="1491.24" y="384.47" width="21.0" height="17.56" fill="#ecb258"/><rect x="1517.56" y="419.84" width="21.0" height="11.36" fill="#9aaabb"/><rect x="1517.56" y="409.51" width="21.0" height="10.33" fill="#97dca0"/><rect x="1517.56" y="404.61" width="21.0" height="4.91" fill="#e2544c"/><rect x="1517.56" y="392.22" width="21.0" height="12.39" fill="#ecb258"/><rect x="1543.88" y="424.75" width="21.0" height="6.45" fill="#97dca0"/><rect x="1543.88" y="414.93" width="21.0" height="9.81" fill="#e2544c"/><rect x="1543.88" y="389.63" width="21.0" height="25.30" fill="#ecb258"/><rect x="1570.20" y="429.91" width="21.0" height="1.29" fill="#9aaabb"/><rect x="1570.20" y="414.68" width="21.0" height="15.23" fill="#97dca0"/><rect x="1570.20" y="392.22" width="21.0" height="22.46" fill="#ecb258"/><rect x="1596.52" y="429.91" width="21.0" height="1.29" fill="#9aaabb"/><rect x="1596.52" y="414.68" width="21.0" height="15.23" fill="#97dca0"/><rect x="1596.52" y="402.03" width="21.0" height="12.65" fill="#e2544c"/><rect x="1596.52" y="382.15" width="21.0" height="19.88" fill="#ecb258"/><rect x="1622.84" y="417.00" width="21.0" height="14.20" fill="#97dca0"/><rect x="1622.84" y="407.19" width="21.0" height="9.81" fill="#e2544c"/><rect x="1622.84" y="374.40" width="21.0" height="32.79" fill="#ecb258"/><rect x="1649.16" y="429.91" width="21.0" height="1.29" fill="#9aaabb"/><rect x="1649.16" y="417.00" width="21.0" height="12.91" fill="#97dca0"/><rect x="1649.16" y="414.93" width="21.0" height="2.07" fill="#e2544c"/><rect x="1649.16" y="394.54" width="21.0" height="20.40" fill="#ecb258"/><rect x="1675.48" y="430.43" width="21.0" height="0.77" fill="#9aaabb"/><rect x="1675.48" y="429.39" width="21.0" height="1.03" fill="#97dca0"/><rect x="1675.48" y="427.07" width="21.0" height="2.32" fill="#e2544c"/><rect x="1675.48" y="402.03" width="21.0" height="25.04" fill="#ecb258"/><rect x="1701.80" y="429.91" width="21.0" height="1.29" fill="#9aaabb"/><rect x="1701.80" y="414.68" width="21.0" height="15.23" fill="#97dca0"/><rect x="1701.80" y="404.61" width="21.0" height="10.07" fill="#e2544c"/><rect x="1701.80" y="379.56" width="21.0" height="25.04" fill="#ecb258"/><rect x="1728.12" y="429.91" width="21.0" height="1.29" fill="#9aaabb"/><rect x="1728.12" y="414.68" width="21.0" height="15.23" fill="#97dca0"/><rect x="1728.12" y="409.77" width="21.0" height="4.91" fill="#e2544c"/><rect x="1728.12" y="389.63" width="21.0" height="20.14" fill="#ecb258"/><rect x="1754.44" y="429.91" width="21.0" height="1.29" fill="#9aaabb"/><rect x="1754.44" y="414.68" width="21.0" height="15.23" fill="#97dca0"/><rect x="1754.44" y="404.61" width="21.0" height="10.07" fill="#e2544c"/><rect x="1754.44" y="376.98" width="21.0" height="27.63" fill="#ecb258"/><rect x="1780.76" y="427.07" width="21.0" height="4.13" fill="#9aaabb"/><rect x="1780.76" y="409.51" width="21.0" height="17.56" fill="#97dca0"/><rect x="1780.76" y="402.03" width="21.0" height="7.49" fill="#e2544c"/><rect x="1780.76" y="376.98" width="21.0" height="25.04" fill="#ecb258"/><rect x="1807.08" y="417.00" width="21.0" height="14.20" fill="#9aaabb"/><rect x="1807.08" y="399.70" width="21.0" height="17.30" fill="#97dca0"/><rect x="1807.08" y="397.12" width="21.0" height="2.58" fill="#e2544c"/><rect x="1807.08" y="376.98" width="21.0" height="20.14" fill="#ecb258"/><rect x="1833.40" y="429.91" width="21.0" height="1.29" fill="#9aaabb"/><rect x="1833.40" y="427.07" width="21.0" height="2.84" fill="#97dca0"/><rect x="1833.40" y="422.16" width="21.0" height="4.91" fill="#e2544c"/><rect x="1833.40" y="407.19" width="21.0" height="14.97" fill="#ecb258"/><rect x="1859.72" y="429.91" width="21.0" height="1.29" fill="#9aaabb"/><rect x="1859.72" y="417.00" width="21.0" height="12.91" fill="#97dca0"/><rect x="1859.72" y="404.61" width="21.0" height="12.39" fill="#e2544c"/><rect x="1859.72" y="387.05" width="21.0" height="17.56" fill="#ecb258"/><rect x="1886.04" y="429.91" width="21.0" height="1.29" fill="#9aaabb"/><rect x="1886.04" y="414.68" width="21.0" height="15.23" fill="#97dca0"/><rect x="1886.04" y="392.22" width="21.0" height="22.46" fill="#ecb258"/><rect x="1912.36" y="414.68" width="21.0" height="16.52" fill="#9aaabb"/><rect x="1912.36" y="397.12" width="21.0" height="17.56" fill="#97dca0"/><rect x="1912.36" y="387.05" width="21.0" height="10.07" fill="#e2544c"/><rect x="1912.36" y="362.01" width="21.0" height="25.04" fill="#ecb258"/><rect x="1938.68" y="417.00" width="21.0" height="14.20" fill="#9aaabb"/><rect x="1938.68" y="399.70" width="21.0" height="17.30" fill="#97dca0"/><rect x="1938.68" y="392.22" width="21.0" height="7.49" fill="#e2544c"/><rect x="1938.68" y="366.91" width="21.0" height="25.30" fill="#ecb258"/><rect x="1965.00" y="429.91" width="21.0" height="1.29" fill="#9aaabb"/><rect x="1965.00" y="417.00" width="21.0" height="12.91" fill="#97dca0"/><rect x="1965.00" y="399.70" width="21.0" height="17.30" fill="#ecb258"/><rect x="1991.32" y="430.43" width="21.0" height="0.77" fill="#9aaabb"/><rect x="1991.32" y="429.39" width="21.0" height="1.03" fill="#97dca0"/><rect x="1991.32" y="424.75" width="21.0" height="4.65" fill="#e2544c"/><rect x="1991.32" y="402.03" width="21.0" height="22.72" fill="#ecb258"/><rect x="2017.64" y="429.91" width="21.0" height="1.29" fill="#9aaabb"/><rect x="2017.64" y="414.68" width="21.0" height="15.23" fill="#97dca0"/><rect x="2017.64" y="399.70" width="21.0" height="14.97" fill="#e2544c"/><rect x="2017.64" y="376.98" width="21.0" height="22.72" fill="#ecb258"/><rect x="2043.96" y="424.75" width="21.0" height="6.45" fill="#9aaabb"/><rect x="2043.96" y="407.19" width="21.0" height="17.56" fill="#97dca0"/><rect x="2043.96" y="402.03" width="21.0" height="5.16" fill="#e2544c"/><rect x="2043.96" y="376.98" width="21.0" height="25.04" fill="#ecb258"/><rect x="2070.28" y="419.84" width="21.0" height="11.36" fill="#9aaabb"/><rect x="2070.28" y="402.03" width="21.0" height="17.81" fill="#97dca0"/><rect x="2070.28" y="394.54" width="21.0" height="7.49" fill="#e2544c"/><rect x="2070.28" y="366.91" width="21.0" height="27.63" fill="#ecb258"/><rect x="2096.60" y="429.91" width="21.0" height="1.29" fill="#9aaabb"/><rect x="2096.60" y="414.68" width="21.0" height="15.23" fill="#97dca0"/><rect x="2096.60" y="402.03" width="21.0" height="12.65" fill="#e2544c"/><rect x="2096.60" y="376.98" width="21.0" height="25.04" fill="#ecb258"/><rect x="2122.92" y="427.07" width="21.0" height="4.13" fill="#9aaabb"/><rect x="2122.92" y="409.51" width="21.0" height="17.56" fill="#97dca0"/><rect x="2122.92" y="407.19" width="21.0" height="2.32" fill="#e2544c"/><rect x="2122.92" y="387.05" width="21.0" height="20.14" fill="#ecb258"/><rect x="2149.24" y="427.07" width="21.0" height="4.13" fill="#9aaabb"/><rect x="2149.24" y="422.16" width="21.0" height="4.91" fill="#97dca0"/><rect x="2149.24" y="419.84" width="21.0" height="2.32" fill="#e2544c"/><rect x="2149.24" y="399.70" width="21.0" height="20.14" fill="#ecb258"/><rect x="2175.56" y="427.07" width="21.0" height="4.13" fill="#9aaabb"/><rect x="2175.56" y="417.00" width="21.0" height="10.07" fill="#97dca0"/><rect x="2175.56" y="407.19" width="21.0" height="9.81" fill="#e2544c"/><rect x="2175.56" y="384.47" width="21.0" height="22.72" fill="#ecb258"/><rect x="2201.88" y="424.75" width="21.0" height="6.45" fill="#9aaabb"/><rect x="2201.88" y="407.19" width="21.0" height="17.56" fill="#97dca0"/><rect x="2201.88" y="389.63" width="21.0" height="17.56" fill="#ecb258"/><rect x="2228.20" y="409.77" width="21.0" height="21.43" fill="#9aaabb"/><rect x="2228.20" y="394.54" width="21.0" height="15.23" fill="#97dca0"/><rect x="2228.20" y="387.05" width="21.0" height="7.49" fill="#e2544c"/><rect x="2228.20" y="364.33" width="21.0" height="22.72" fill="#ecb258"/><rect x="2254.52" y="422.16" width="21.0" height="9.04" fill="#9aaabb"/><rect x="2254.52" y="404.61" width="21.0" height="17.56" fill="#97dca0"/><rect x="2254.52" y="397.12" width="21.0" height="7.49" fill="#e2544c"/><rect x="2254.52" y="374.40" width="21.0" height="22.72" fill="#ecb258"/><rect x="2280.84" y="424.75" width="21.0" height="6.45" fill="#97dca0"/><rect x="2280.84" y="422.16" width="21.0" height="2.58" fill="#e2544c"/><rect x="2280.84" y="407.19" width="21.0" height="14.97" fill="#ecb258"/><rect x="2307.16" y="427.07" width="21.0" height="4.13" fill="#9aaabb"/><rect x="2307.16" y="419.58" width="21.0" height="7.49" fill="#97dca0"/><rect x="2307.16" y="414.93" width="21.0" height="4.65" fill="#e2544c"/><rect x="2307.16" y="394.54" width="21.0" height="20.40" fill="#ecb258"/><rect x="2333.48" y="424.75" width="21.0" height="6.45" fill="#9aaabb"/><rect x="2333.48" y="407.19" width="21.0" height="17.56" fill="#97dca0"/><rect x="2333.48" y="397.12" width="21.0" height="10.07" fill="#e2544c"/><rect x="2333.48" y="369.50" width="21.0" height="27.63" fill="#ecb258"/><rect x="2359.80" y="424.75" width="21.0" height="6.45" fill="#9aaabb"/><rect x="2359.80" y="407.19" width="21.0" height="17.56" fill="#97dca0"/><rect x="2359.80" y="387.05" width="21.0" height="20.14" fill="#ecb258"/><rect x="2386.12" y="424.75" width="21.0" height="6.45" fill="#9aaabb"/><rect x="2386.12" y="407.19" width="21.0" height="17.56" fill="#97dca0"/><rect x="2386.12" y="384.73" width="21.0" height="22.46" fill="#e2544c"/><rect x="2386.12" y="362.01" width="21.0" height="22.72" fill="#ecb258"/><rect x="2412.44" y="429.65" width="21.0" height="1.55" fill="#9aaabb"/><rect x="2412.44" y="414.42" width="21.0" height="15.23" fill="#97dca0"/><rect x="2412.44" y="384.73" width="21.0" height="29.69" fill="#e2544c"/><rect x="2412.44" y="359.30" width="21.0" height="25.43" fill="#ecb258"/><rect x="2438.76" y="429.65" width="21.0" height="1.55" fill="#9aaabb"/><rect x="2438.76" y="419.45" width="21.0" height="10.20" fill="#97dca0"/><rect x="2438.76" y="406.80" width="21.0" height="12.65" fill="#e2544c"/><rect x="2438.76" y="389.25" width="21.0" height="17.56" fill="#ecb258"/><rect x="2465.08" y="427.07" width="21.0" height="4.13" fill="#97dca0"/><rect x="2465.08" y="404.74" width="21.0" height="22.33" fill="#e2544c"/><rect x="2465.08" y="381.89" width="21.0" height="22.85" fill="#ecb258"/><rect x="2491.40" y="417.00" width="21.0" height="14.20" fill="#97dca0"/><rect x="2491.40" y="386.79" width="21.0" height="30.21" fill="#e2544c"/><rect x="2491.40" y="364.46" width="21.0" height="22.33" fill="#ecb258"/><rect x="2517.72" y="427.07" width="21.0" height="4.13" fill="#9aaabb"/><rect x="2517.72" y="409.64" width="21.0" height="17.43" fill="#97dca0"/><rect x="2517.72" y="394.80" width="21.0" height="14.85" fill="#e2544c"/><rect x="2517.72" y="376.98" width="21.0" height="17.81" fill="#ecb258"/></svg>
<div class="a" style="left:253.00px;top:430.60px;width:2400.00px;height:1.35px;background:#3f3d43;"></div>
<div class="a" style="left:305.20px;top:431.00px;width:1.40px;height:12.50px;background:#3f3d43;"></div>
<div class="t s" style="left:275.70px;top:448.78px;font-size:23.2px;color:#38363c;letter-spacing:-0.1px;">15:31</div>
<div class="a" style="left:621.10px;top:431.00px;width:1.40px;height:12.50px;background:#3f3d43;"></div>
<div class="t s" style="left:591.60px;top:448.78px;font-size:23.2px;color:#38363c;letter-spacing:-0.1px;">15:32</div>
<div class="a" style="left:937.00px;top:431.00px;width:1.40px;height:12.50px;background:#3f3d43;"></div>
<div class="t s" style="left:907.50px;top:448.78px;font-size:23.2px;color:#38363c;letter-spacing:-0.1px;">15:33</div>
<div class="a" style="left:1252.90px;top:431.00px;width:1.40px;height:12.50px;background:#3f3d43;"></div>
<div class="t s" style="left:1223.40px;top:448.78px;font-size:23.2px;color:#38363c;letter-spacing:-0.1px;">15:34</div>
<div class="a" style="left:1568.80px;top:431.00px;width:1.40px;height:12.50px;background:#3f3d43;"></div>
<div class="t s" style="left:1539.30px;top:448.78px;font-size:23.2px;color:#38363c;letter-spacing:-0.1px;">15:35</div>
<div class="a" style="left:1884.70px;top:431.00px;width:1.40px;height:12.50px;background:#3f3d43;"></div>
<div class="t s" style="left:1855.20px;top:448.78px;font-size:23.2px;color:#38363c;letter-spacing:-0.1px;">15:36</div>
<div class="a" style="left:2200.60px;top:431.00px;width:1.40px;height:12.50px;background:#3f3d43;"></div>
<div class="t s" style="left:2171.10px;top:448.78px;font-size:23.2px;color:#38363c;letter-spacing:-0.1px;">15:37</div>
<div class="a" style="left:2516.50px;top:431.00px;width:1.40px;height:12.50px;background:#3f3d43;"></div>
<div class="t s" style="left:2487.00px;top:448.78px;font-size:23.2px;color:#38363c;letter-spacing:-0.1px;">15:38</div>
<div class="t s" style="left:218.60px;top:351.58px;font-size:23.2px;color:#38363c;">25</div>
<div class="t s" style="left:233.20px;top:418.58px;font-size:23.2px;color:#38363c;">0</div>
<div class="t s" style="left:206.00px;top:519.17px;font-size:33.8px;color:#38363c;letter-spacing:-0.1px;">Filters (38)</div>
<div class="t s" style="left:494.60px;top:519.88px;font-size:33.2px;color:#8f8d92;letter-spacing:-0.45px;">Saved Views</div>
<svg style="left:0;top:0" width="500" height="600" viewBox="0 0 500 600"><g transform="translate(394.3 539.7) rotate(45)" fill="#908e93">
<rect x="-5.7" y="-22.2" width="11.4" height="8.7" rx="2.7"/>
<path d="M-5.7 -12.1H5.7V12.2L0 22.2L-5.7 12.2Z"/>
<rect x="-2.9" y="-8.6" width="1.9" height="17.4" fill="#fff"/>
<path d="M-4.2 13.2L0 16.6L4.2 13.2L3.4 14.8L0 18.8L-3.4 14.8Z" fill="#fff"/>
</g>
</svg>
<div class="a" style="left:204.00px;top:572.00px;width:214.00px;height:10.40px;background:#3399cc;"></div>
<div class="a" style="left:166.00px;top:582.20px;width:604.00px;height:1.60px;background:#dcdbe0;"></div>
<div class="a" style="left:166px;top:604.3px;width:604px;height:69.5px;border:2px solid #dcdbe0;border-radius:7px;background:#fff"></div>
<svg style="left:0;top:0" width="300" height="700" viewBox="0 0 300 700"><circle cx="200.3" cy="636.2" r="11.6" fill="none" stroke="#b1afb5" stroke-width="5"/><path d="M209 645L217 653" stroke="#b1afb5" stroke-width="5.4" stroke-linecap="round"/></svg>
<div class="t s" style="left:237.40px;top:621.58px;font-size:33.2px;color:#b3b1b7;letter-spacing:-0.05px;">Search facets</div>
<div class="a" style="left:166.00px;top:694.00px;width:604.00px;height:59.70px;background:#e9e9ec;border-radius:5px;"></div>
<svg style="left:0;top:0" width="800" height="2622" viewBox="0 0 800 2622"><path d="M193.55 719.1L203 729.6999999999999L212.45 719.1" fill="none" stroke="#5f5d62" stroke-width="2.8" stroke-linecap="round" stroke-linejoin="round"/></svg>
<div class="t s" style="left:230.50px;top:711.67px;font-size:25.8px;color:#5f5d62;letter-spacing:-1.0px;">CORE</div>
<svg style="left:0;top:0" width="800" height="2622" viewBox="0 0 800 2622"><path d="M200.05 797.3499999999999L211.55 808.5999999999999L200.05 819.8499999999999" fill="none" stroke="#5f5d62" stroke-width="3" stroke-linecap="round" stroke-linejoin="round"/></svg>
<div class="t s" style="left:235.60px;top:791.52px;font-size:33.5px;color:#2f2d33;font-weight:700;letter-spacing:-0.65px;">Source</div>
<div class="a" style="left:166.00px;top:853.90px;width:604.00px;height:1.60px;background:#dcdbe0;"></div>
<svg style="left:0;top:0" width="800" height="2622" viewBox="0 0 800 2622"><path d="M200.05 889.25L211.55 900.5L200.05 911.75" fill="none" stroke="#5f5d62" stroke-width="3" stroke-linecap="round" stroke-linejoin="round"/></svg>
<div class="t s" style="left:235.60px;top:883.43px;font-size:33.5px;color:#2f2d33;font-weight:700;letter-spacing:-0.2px;">Host</div>
<div class="a" style="left:166.00px;top:945.80px;width:604.00px;height:1.60px;background:#dcdbe0;"></div>
<svg style="left:0;top:0" width="800" height="2622" viewBox="0 0 800 2622"><path d="M200.05 981.3499999999999L211.55 992.5999999999999L200.05 1003.8499999999999" fill="none" stroke="#5f5d62" stroke-width="3" stroke-linecap="round" stroke-linejoin="round"/></svg>
<div class="t s" style="left:235.60px;top:975.52px;font-size:33.5px;color:#2f2d33;font-weight:700;letter-spacing:-0.45px;">Service</div>
<div class="a" style="left:166.00px;top:1037.90px;width:604.00px;height:1.60px;background:#dcdbe0;"></div>
<svg style="left:0;top:0" width="800" height="2622" viewBox="0 0 800 2622"><path d="M194.5 1080.2L205.8 1092.6000000000001L217.10000000000002 1080.2" fill="none" stroke="#5f5d62" stroke-width="3" stroke-linecap="round" stroke-linejoin="round"/></svg>
<div class="t s" style="left:235.60px;top:1069.43px;font-size:33.5px;color:#2f2d33;font-weight:700;">Status</div>
<div class="a" style="left:654.2px;top:784px;width:95.8px;height:49.8px;border:2px solid #939196;border-radius:7px;background:linear-gradient(90deg,#fff 0,#fff 44.3px,#939196 44.3px)"></div>
<svg style="left:0;top:0" width="800" height="900" viewBox="0 0 800 900">
<path d="M667.4 797.6H688.6L681 807.4V819.4L679.8 820.4L675.5 817.6V807.4Z" fill="#3c3a40" stroke="#3c3a40" stroke-width="0.8" stroke-linejoin="round"/>
<path d="M718.6 801.8L733 816.2M733 801.8L718.6 816.2" stroke="#fff" stroke-width="5.2" stroke-linecap="butt"/>
</svg>
<div class="a" style="left:192.40px;top:1148.20px;width:35.20px;height:35.60px;background:#3399cc;border-radius:6px;"></div>
<svg style="left:0;top:0" width="300" height="2622" viewBox="0 0 300 2622"><path d="M199.6 1164.7L207.2 1172.0L220.3 1159.0" fill="none" stroke="#fff" stroke-width="4.6"/></svg>
<div class="a" style="left:246.00px;top:1145.90px;width:12.20px;height:40.20px;background:#e2544c;border-radius:6.1px;"></div>
<div class="t s" style="left:268.60px;top:1149.41px;font-size:33.4px;color:#38363c;letter-spacing:0.15px;">Error</div>
<div class="t s" style="right:3077px;top:1151.70px;font-size:30px;color:#8f8d92;letter-spacing:-0.15px">1.00k</div>
<div class="a" style="left:192.40px;top:1216.20px;width:35.20px;height:35.60px;background:#3399cc;border-radius:6px;"></div>
<svg style="left:0;top:0" width="300" height="2622" viewBox="0 0 300 2622"><path d="M199.6 1232.7L207.2 1240.0L220.3 1227.0" fill="none" stroke="#fff" stroke-width="4.6"/></svg>
<div class="a" style="left:246.00px;top:1213.90px;width:12.20px;height:40.20px;background:#ecb258;border-radius:6.1px;"></div>
<div class="t s" style="left:268.60px;top:1217.41px;font-size:33.4px;color:#38363c;letter-spacing:0.15px;">Warn</div>
<div class="t s" style="right:3077px;top:1219.70px;font-size:30px;color:#8f8d92;letter-spacing:-0.15px">1.49k</div>
<div class="a" style="left:192.40px;top:1284.20px;width:35.20px;height:35.60px;background:#3399cc;border-radius:6px;"></div>
<svg style="left:0;top:0" width="300" height="2622" viewBox="0 0 300 2622"><path d="M199.6 1300.7L207.2 1308.0L220.3 1295.0" fill="none" stroke="#fff" stroke-width="4.6"/></svg>
<div class="a" style="left:246.00px;top:1281.90px;width:12.20px;height:40.20px;background:#9aaabb;border-radius:6.1px;"></div>
<div class="t s" style="left:268.60px;top:1285.41px;font-size:33.4px;color:#38363c;letter-spacing:0.15px;">Notice</div>
<div class="t s" style="right:3077px;top:1287.70px;font-size:30px;color:#8f8d92;letter-spacing:-0.15px">372</div>
<div class="a" style="left:192.40px;top:1352.20px;width:35.20px;height:35.60px;background:#3399cc;border-radius:6px;"></div>
<svg style="left:0;top:0" width="300" height="2622" viewBox="0 0 300 2622"><path d="M199.6 1368.7L207.2 1376.0L220.3 1363.0" fill="none" stroke="#fff" stroke-width="4.6"/></svg>
<div class="a" style="left:246.00px;top:1349.90px;width:12.20px;height:40.20px;background:#9ecbe4;border-radius:6.1px;"></div>
<div class="t s" style="left:268.60px;top:1353.41px;font-size:33.4px;color:#38363c;letter-spacing:0.15px;">Info</div>
<div class="t s" style="right:3077px;top:1355.70px;font-size:30px;color:#8f8d92;letter-spacing:-0.15px">0</div>
<div class="a" style="left:192.40px;top:1420.20px;width:35.20px;height:35.60px;background:#3399cc;border-radius:6px;"></div>
<svg style="left:0;top:0" width="300" height="2622" viewBox="0 0 300 2622"><path d="M199.6 1436.7L207.2 1444.0L220.3 1431.0" fill="none" stroke="#fff" stroke-width="4.6"/></svg>
<div class="a" style="left:246.00px;top:1417.90px;width:12.20px;height:40.20px;background:#97dca0;border-radius:6.1px;"></div>
<div class="t s" style="left:268.60px;top:1421.41px;font-size:33.4px;color:#38363c;letter-spacing:0.15px;">Ok</div>
<div class="t s" style="right:3077px;top:1423.70px;font-size:30px;color:#8f8d92;letter-spacing:-0.15px">875</div>
<div class="a" style="left:166.00px;top:1512.00px;width:604.00px;height:59.70px;background:#e9e9ec;border-radius:5px;"></div>
<svg style="left:0;top:0" width="800" height="2622" viewBox="0 0 800 2622"><path d="M193.55 1537.1000000000001L203 1547.7L212.45 1537.1000000000001" fill="none" stroke="#5f5d62" stroke-width="2.8" stroke-linecap="round" stroke-linejoin="round"/></svg>
<div class="t s" style="left:230.50px;top:1529.67px;font-size:25.8px;color:#5f5d62;letter-spacing:-1.0px;">AWS</div>
<svg style="left:0;top:0" width="800" height="2622" viewBox="0 0 800 2622"><path d="M200.05 1615.35L211.55 1626.6L200.05 1637.85" fill="none" stroke="#5f5d62" stroke-width="3" stroke-linecap="round" stroke-linejoin="round"/></svg>
<div class="t s" style="left:235.60px;top:1609.53px;font-size:33.5px;color:#2f2d33;font-weight:700;letter-spacing:-0.4px;">Role</div>
<div class="a" style="left:166.00px;top:1671.90px;width:604.00px;height:1.60px;background:#dcdbe0;"></div>
<svg style="left:0;top:0" width="800" height="2622" viewBox="0 0 800 2622"><path d="M200.05 1707.35L211.55 1718.6L200.05 1729.85" fill="none" stroke="#5f5d62" stroke-width="3" stroke-linecap="round" stroke-linejoin="round"/></svg>
<div class="t s" style="left:235.60px;top:1701.53px;font-size:33.5px;color:#2f2d33;font-weight:700;letter-spacing:0.45px;">Availability zone</div>
<div class="a" style="left:166.00px;top:1763.90px;width:604.00px;height:1.60px;background:#dcdbe0;"></div>
<svg style="left:0;top:0" width="800" height="2622" viewBox="0 0 800 2622"><path d="M200.05 1799.6499999999999L211.55 1810.8999999999999L200.05 1822.1499999999999" fill="none" stroke="#5f5d62" stroke-width="3" stroke-linecap="round" stroke-linejoin="round"/></svg>
<div class="t s" style="left:235.60px;top:1793.83px;font-size:33.5px;color:#2f2d33;font-weight:700;letter-spacing:1.3px;">Name</div>
<div class="a" style="left:166.00px;top:1856.20px;width:604.00px;height:1.60px;background:#dcdbe0;"></div>
<svg style="left:0;top:0" width="800" height="2622" viewBox="0 0 800 2622"><path d="M200.05 1891.85L211.55 1903.1L200.05 1914.35" fill="none" stroke="#5f5d62" stroke-width="3" stroke-linecap="round" stroke-linejoin="round"/></svg>
<div class="t s" style="left:235.60px;top:1886.03px;font-size:33.5px;color:#2f2d33;font-weight:700;letter-spacing:0.5px;">Event Name</div>
<div class="a" style="left:166.00px;top:1948.40px;width:604.00px;height:1.60px;background:#dcdbe0;"></div>
<svg style="left:0;top:0" width="800" height="2622" viewBox="0 0 800 2622"><path d="M200.05 1984.6499999999999L211.55 1995.8999999999999L200.05 2007.1499999999999" fill="none" stroke="#5f5d62" stroke-width="3" stroke-linecap="round" stroke-linejoin="round"/></svg>
<div class="t s" style="left:235.60px;top:1978.83px;font-size:33.5px;color:#2f2d33;font-weight:700;letter-spacing:-0.4px;">Log Group</div>
<div class="a" style="left:166.00px;top:2041.20px;width:604.00px;height:1.60px;background:#dcdbe0;"></div>
<svg style="left:0;top:0" width="800" height="2622" viewBox="0 0 800 2622"><path d="M200.05 2077.25L211.55 2088.5L200.05 2099.75" fill="none" stroke="#5f5d62" stroke-width="3" stroke-linecap="round" stroke-linejoin="round"/></svg>
<div class="t s" style="left:235.60px;top:2071.42px;font-size:33.5px;color:#2f2d33;font-weight:700;letter-spacing:-0.45px;">S3 Bucket</div>
<div class="a" style="left:166.00px;top:2133.80px;width:604.00px;height:1.60px;background:#dcdbe0;"></div>
<svg style="left:0;top:0" width="800" height="2622" viewBox="0 0 800 2622"><path d="M200.05 2170.25L211.55 2181.5L200.05 2192.75" fill="none" stroke="#5f5d62" stroke-width="3" stroke-linecap="round" stroke-linejoin="round"/></svg>
<div class="t s" style="left:235.60px;top:2164.42px;font-size:33.5px;color:#2f2d33;font-weight:700;letter-spacing:-1.05px;">Env</div>
<div class="a" style="left:166.00px;top:2226.80px;width:604.00px;height:1.60px;background:#dcdbe0;"></div>
<svg style="left:0;top:0" width="800" height="2622" viewBox="0 0 800 2622"><path d="M200.05 2261.65L211.55 2272.9L200.05 2284.15" fill="none" stroke="#5f5d62" stroke-width="3" stroke-linecap="round" stroke-linejoin="round"/></svg>
<div class="t s" style="left:235.60px;top:2255.82px;font-size:33.5px;color:#2f2d33;font-weight:700;letter-spacing:0.4px;">Task Id</div>
<div class="a" style="left:166.00px;top:2318.00px;width:604.00px;height:59.70px;background:#e9e9ec;border-radius:5px;"></div>
<svg style="left:0;top:0" width="800" height="2622" viewBox="0 0 800 2622"><path d="M197.75 2338.0L208.25 2348L197.75 2358.0" fill="none" stroke="#5f5d62" stroke-width="3" stroke-linecap="round" stroke-linejoin="round"/></svg>
<div class="t s" style="left:230.50px;top:2335.67px;font-size:25.8px;color:#5f5d62;letter-spacing:0.9px;">LAMBDA</div>
<div class="a" style="left:166.00px;top:2388.20px;width:604.00px;height:59.70px;background:#e9e9ec;border-radius:5px;"></div>
<svg style="left:0;top:0" width="800" height="2622" viewBox="0 0 800 2622"><path d="M193.55 2413.2999999999997L203 2423.9L212.45 2413.2999999999997" fill="none" stroke="#5f5d62" stroke-width="2.8" stroke-linecap="round" stroke-linejoin="round"/></svg>
<div class="t s" style="left:230.50px;top:2405.87px;font-size:25.8px;color:#5f5d62;letter-spacing:-0.83px;">WEB ACCESS</div>
<svg style="left:0;top:0" width="800" height="2622" viewBox="0 0 800 2622"><path d="M200.05 2491.4500000000003L211.55 2502.7000000000003L200.05 2513.9500000000003" fill="none" stroke="#5f5d62" stroke-width="3" stroke-linecap="round" stroke-linejoin="round"/></svg>
<div class="t s" style="left:235.60px;top:2485.62px;font-size:33.5px;color:#2f2d33;font-weight:700;letter-spacing:-0.28px;">URL Path</div>
<div class="a" style="left:166.00px;top:2548.00px;width:604.00px;height:1.60px;background:#dcdbe0;"></div>
<svg style="left:0;top:0" width="800" height="2622" viewBox="0 0 800 2622"><path d="M200.05 2584.65L211.55 2595.9L200.05 2607.15" fill="none" stroke="#5f5d62" stroke-width="3" stroke-linecap="round" stroke-linejoin="round"/></svg>
<div class="t s" style="left:235.60px;top:2578.82px;font-size:33.5px;color:#2f2d33;font-weight:700;letter-spacing:0.95px;">Duration</div>
<svg style="left:0;top:0" width="1200" height="600" viewBox="0 0 1200 600">
<defs><pattern id="hatch" width="3.2" height="3.2" patternUnits="userSpaceOnUse" patternTransform="rotate(-45)"><rect width="3.2" height="1.3" fill="#3399cc"/></pattern></defs>
<rect x="828.4" y="524.4" width="10.2" height="29.4" fill="url(#hatch)"/>
<rect x="827.3" y="523.2" width="31.5" height="31.6" rx="3.2" fill="none" stroke="#3399cc" stroke-width="2.5"/>
<path d="M851.2 532.4L843.3 539L851.2 545.8" fill="none" stroke="#3399cc" stroke-width="2.7" stroke-linecap="round" stroke-linejoin="round"/>
</svg>
<div class="t s" style="left:877.00px;top:520.30px;font-size:34.7px;color:#3399cc;letter-spacing:-0.32px;">Hide Controls</div>
<div class="a" style="left:1132.40px;top:528.60px;width:1.60px;height:33.00px;background:#dcdbe0;"></div>
<div class="t s" style="left:1181.60px;top:527.55px;font-size:33px;color:#111;font-weight:700;letter-spacing:0.62px;">24 patterns found</div>
<div class="t s" style="left:1479.50px;top:527.55px;font-size:33px;color:#8f8d92;letter-spacing:0.2px;">(based on 3,668 events)</div>
<div class="a" style="left:810px;top:584px;width:1800px;height:2100px;border:2px solid #dcdbe0;border-radius:4px 0 0 0;background:#fff"></div>
<div class="t s" style="left:908.60px;top:615.44px;font-size:31.6px;color:#2f2d33;font-weight:700;letter-spacing:-0.75px;">MATCHES</div>
<div class="t s" style="left:1354.60px;top:615.44px;font-size:31.6px;color:#2f2d33;font-weight:700;letter-spacing:0.4px;">~VOLUME</div>
<div class="t s" style="left:1647.60px;top:615.44px;font-size:31.6px;color:#2f2d33;font-weight:700;letter-spacing:-1.05px;">SERVICE</div>
<div class="t s" style="left:2022.60px;top:615.44px;font-size:31.6px;color:#2f2d33;font-weight:700;letter-spacing:-0.3px;">PATTERN</div>
<div class="a" style="left:814.00px;top:674.60px;width:1800.00px;height:1.70px;background:#dcdbe0;"></div>
<div class="a" style="left:814.00px;top:852.17px;width:1800.00px;height:1.70px;background:#dcdbe0;"></div>
<div class="a" style="left:834.00px;top:701.90px;width:16.20px;height:124.20px;background:#ecb258;border-radius:5px;"></div>
<div class="t s" style="left:908.00px;top:748.15px;font-size:33px;color:#38363c;letter-spacing:-0.95px;">1.09K</div>
<div class="a" style="left:1010.00px;top:740.00px;width:149.80px;height:50.00px;background:#e8e8eb;"></div>
<div class="a" style="left:1010.00px;top:740.00px;width:44.50px;height:50.00px;background:#ecb258;"></div>
<svg style="left:0;top:0" width="1700" height="2622" viewBox="0 0 1700 2622"><g shape-rendering="crispEdges"><rect x="1258" y="727.30" width="19.8" height="73.70" fill="#ecb258"/><rect x="1283" y="728.20" width="19.8" height="72.80" fill="#ecb258"/><rect x="1308" y="726.40" width="19.8" height="74.60" fill="#ecb258"/><rect x="1333" y="728.20" width="19.8" height="72.80" fill="#ecb258"/><rect x="1358" y="729.50" width="19.8" height="71.50" fill="#ecb258"/><rect x="1383" y="727.30" width="19.8" height="73.70" fill="#ecb258"/><rect x="1408" y="729.50" width="19.8" height="71.50" fill="#ecb258"/><rect x="1433" y="727.30" width="19.8" height="73.70" fill="#ecb258"/><rect x="1458" y="727.30" width="19.8" height="73.70" fill="#ecb258"/><rect x="1483" y="741.80" width="19.8" height="59.20" fill="#ecb258"/><rect x="1258" y="800.40" width="250" height="2" fill="#8f8d92"/></g><path d="M1308 726.00H1508" stroke="#8f8d92" stroke-width="1.9" stroke-dasharray="7.5 4.4" fill="none"/></svg>
<div class="t s" style="left:1511.30px;top:711.75px;font-size:29px;color:#8f8d92;letter-spacing:0.4px;">113</div>
<div class="t s" style="left:1647.60px;top:747.75px;font-size:33px;color:#38363c;letter-spacing:0.58px;">fse-auto-process</div>
<div class="a" style="left:2102.00px;top:744.20px;width:136.15px;height:38.00px;background:#fdecd0;"></div>
<div class="t m" style="left:2023.20px;top:747.56px;font-size:34.5px;color:#3a383e;letter-spacing:-1.25px;line-height:38px;margin-top:-1.75px;-webkit-text-stroke:0.3px;">GET /<span style="position:relative;top:6.5px">*</span>/-<span style="position:relative;top:6.5px">*</span><span style="position:relative;top:6.5px">*</span>- HTTP/1.1</div>
<div class="a" style="left:814.00px;top:853.97px;width:1800.00px;height:176.37px;background:#ecf4fb;"></div>
<div class="a" style="left:814.00px;top:1029.74px;width:1800.00px;height:1.70px;background:#dcdbe0;"></div>
<div class="a" style="left:834.00px;top:879.47px;width:16.20px;height:124.20px;background:#97dca0;border-radius:5px;"></div>
<div class="t s" style="left:908.00px;top:925.72px;font-size:33px;color:#38363c;letter-spacing:-0.95px;">872</div>
<div class="a" style="left:982.00px;top:917.57px;width:149.80px;height:50.00px;background:#dfe3e8;"></div>
<div class="a" style="left:982.00px;top:917.57px;width:35.70px;height:50.00px;background:#97dca0;"></div>
<svg style="left:0;top:0" width="1700" height="2622" viewBox="0 0 1700 2622"><g shape-rendering="crispEdges"><rect x="1258" y="911.47" width="19.8" height="67.10" fill="#97dca0"/><rect x="1283" y="909.27" width="19.8" height="69.30" fill="#97dca0"/><rect x="1308" y="904.87" width="19.8" height="73.70" fill="#97dca0"/><rect x="1333" y="908.37" width="19.8" height="70.20" fill="#97dca0"/><rect x="1358" y="909.67" width="19.8" height="68.90" fill="#97dca0"/><rect x="1383" y="905.77" width="19.8" height="72.80" fill="#97dca0"/><rect x="1408" y="909.27" width="19.8" height="69.30" fill="#97dca0"/><rect x="1433" y="908.37" width="19.8" height="70.20" fill="#97dca0"/><rect x="1458" y="909.67" width="19.8" height="68.90" fill="#97dca0"/><rect x="1483" y="920.67" width="19.8" height="57.90" fill="#97dca0"/><rect x="1258" y="977.97" width="250" height="2" fill="#8f8d92"/></g><path d="M1308 904.47H1508" stroke="#8f8d92" stroke-width="1.9" stroke-dasharray="7.5 4.4" fill="none"/></svg>
<div class="t s" style="left:1511.30px;top:890.22px;font-size:29px;color:#8f8d92;letter-spacing:0.4px;">94</div>
<div class="t s" style="left:1647.60px;top:925.32px;font-size:33px;color:#38363c;letter-spacing:0.58px;">fse-auto-process</div>
<div class="a" style="left:2102.00px;top:921.77px;width:233.40px;height:38.00px;background:#fdecd0;"></div>
<div class="t m" style="left:2023.20px;top:925.13px;font-size:34.5px;color:#3a383e;letter-spacing:-1.25px;line-height:38px;margin-top:-1.75px;-webkit-text-stroke:0.3px;">GET /pass/<span style="position:relative;top:6.5px">*</span>/-<span style="position:relative;top:6.5px">*</span><span style="position:relative;top:6.5px">*</span>- HTTP/1.1</div>
<div class="a" style="left:814.00px;top:1207.31px;width:1800.00px;height:1.70px;background:#dcdbe0;"></div>
<div class="a" style="left:834.00px;top:1057.04px;width:16.20px;height:124.20px;background:#e2544c;border-radius:5px;"></div>
<div class="t s" style="left:908.00px;top:1103.29px;font-size:33px;color:#38363c;letter-spacing:-0.95px;">522</div>
<div class="a" style="left:982.00px;top:1095.14px;width:149.80px;height:50.00px;background:#e8e8eb;"></div>
<div class="a" style="left:982.00px;top:1095.14px;width:21.00px;height:50.00px;background:#e2544c;"></div>
<svg style="left:0;top:0" width="1700" height="2622" viewBox="0 0 1700 2622"><g shape-rendering="crispEdges"><rect x="1383" y="1088.14" width="19.8" height="68.00" fill="#e2544c"/><rect x="1408" y="1082.04" width="19.8" height="74.10" fill="#e2544c"/><rect x="1433" y="1080.24" width="19.8" height="75.90" fill="#e2544c"/><rect x="1458" y="1080.24" width="19.8" height="75.90" fill="#e2544c"/><rect x="1483" y="1093.84" width="19.8" height="62.30" fill="#e2544c"/><rect x="1258" y="1155.54" width="250" height="2" fill="#8f8d92"/></g><path d="M1433 1079.84H1508" stroke="#8f8d92" stroke-width="1.9" stroke-dasharray="7.5 4.4" fill="none"/></svg>
<div class="t s" style="left:1511.30px;top:1065.59px;font-size:29px;color:#8f8d92;letter-spacing:0.4px;">111</div>
<div class="t s" style="left:1647.60px;top:1102.89px;font-size:33px;color:#38363c;letter-spacing:0.58px;">fse-auto-process</div>
<div class="a" style="left:2024.20px;top:1073.94px;width:369.55px;height:38.00px;background:#fdecd0;"></div>
<div class="a" style="left:2024.20px;top:1125.44px;width:291.75px;height:38.00px;background:#fdecd0;"></div>
<div class="t m" style="left:2023.20px;top:1077.30px;font-size:34.5px;color:#3a383e;letter-spacing:-1.25px;line-height:38px;margin-top:-1.75px;-webkit-text-stroke:0.3px;">yyyy/MM/dd HH:mm:ss [error] [xxx]</div>
<div class="t m" style="left:2023.20px;top:1128.80px;font-size:34.5px;color:#3a383e;letter-spacing:-1.25px;line-height:38px;margin-top:-1.75px;-webkit-text-stroke:0.3px;">XXX.XXX.XXX.XXX, server: _, request</div>
<div class="a" style="left:814.00px;top:1384.88px;width:1800.00px;height:1.70px;background:#dcdbe0;"></div>
<div class="a" style="left:834.00px;top:1234.61px;width:16.20px;height:124.20px;background:#e2544c;border-radius:5px;"></div>
<div class="t s" style="left:908.00px;top:1280.86px;font-size:33px;color:#38363c;letter-spacing:-0.95px;">223</div>
<div class="a" style="left:982.00px;top:1272.71px;width:149.80px;height:50.00px;background:#e8e8eb;"></div>
<div class="a" style="left:982.00px;top:1272.71px;width:9.00px;height:50.00px;background:#e2544c;"></div>
<svg style="left:0;top:0" width="1700" height="2622" viewBox="0 0 1700 2622"><g shape-rendering="crispEdges"><rect x="1258" y="1258.21" width="19.8" height="75.50" fill="#e2544c"/><rect x="1283" y="1258.21" width="19.8" height="75.50" fill="#e2544c"/><rect x="1308" y="1261.31" width="19.8" height="72.40" fill="#e2544c"/><rect x="1333" y="1261.31" width="19.8" height="72.40" fill="#e2544c"/><rect x="1358" y="1258.21" width="19.8" height="75.50" fill="#e2544c"/><rect x="1383" y="1258.21" width="19.8" height="75.50" fill="#e2544c"/><rect x="1408" y="1258.21" width="19.8" height="75.50" fill="#e2544c"/><rect x="1433" y="1261.31" width="19.8" height="72.40" fill="#e2544c"/><rect x="1458" y="1258.21" width="19.8" height="75.50" fill="#e2544c"/><rect x="1483" y="1271.41" width="19.8" height="62.30" fill="#e2544c"/><rect x="1258" y="1333.11" width="250" height="2" fill="#8f8d92"/></g><path d="M1258 1257.81H1508" stroke="#8f8d92" stroke-width="1.9" stroke-dasharray="7.5 4.4" fill="none"/></svg>
<div class="t s" style="left:1511.30px;top:1243.56px;font-size:29px;color:#8f8d92;letter-spacing:0.4px;">23</div>
<div class="t s" style="left:1647.60px;top:1280.46px;font-size:33px;color:#38363c;letter-spacing:0.58px;">mysql</div>
<div class="a" style="left:2296.50px;top:1276.91px;width:136.15px;height:38.00px;background:#fdecd0;"></div>
<div class="t m" style="left:2023.20px;top:1280.27px;font-size:34.5px;color:#3a383e;letter-spacing:-1.25px;line-height:38px;margin-top:-1.75px;-webkit-text-stroke:0.3px;">Version: &#x27;5.7.[26-27]&#x27; socket: &#x27;/var/run</div>
<div class="a" style="left:814.00px;top:1562.45px;width:1800.00px;height:1.70px;background:#dcdbe0;"></div>
<div class="a" style="left:834.00px;top:1412.18px;width:16.20px;height:124.20px;background:#e2544c;border-radius:5px;"></div>
<div class="t s" style="left:908.00px;top:1458.43px;font-size:33px;color:#38363c;letter-spacing:-0.95px;">153</div>
<div class="a" style="left:982.00px;top:1450.28px;width:149.80px;height:50.00px;background:#e8e8eb;"></div>
<div class="a" style="left:982.00px;top:1450.28px;width:6.00px;height:50.00px;background:#e2544c;"></div>
<svg style="left:0;top:0" width="1700" height="2622" viewBox="0 0 1700 2622"><g shape-rendering="crispEdges"><rect x="1258" y="1441.98" width="19.8" height="69.30" fill="#e2544c"/><rect x="1283" y="1441.98" width="19.8" height="69.30" fill="#e2544c"/><rect x="1308" y="1437.18" width="19.8" height="74.10" fill="#e2544c"/><rect x="1333" y="1437.18" width="19.8" height="74.10" fill="#e2544c"/><rect x="1358" y="1441.98" width="19.8" height="69.30" fill="#e2544c"/><rect x="1383" y="1437.18" width="19.8" height="74.10" fill="#e2544c"/><rect x="1408" y="1437.18" width="19.8" height="74.10" fill="#e2544c"/><rect x="1433" y="1441.98" width="19.8" height="69.30" fill="#e2544c"/><rect x="1458" y="1441.98" width="19.8" height="69.30" fill="#e2544c"/><rect x="1483" y="1446.78" width="19.8" height="64.50" fill="#e2544c"/><rect x="1258" y="1510.68" width="250" height="2" fill="#8f8d92"/></g><path d="M1308 1436.78H1508" stroke="#8f8d92" stroke-width="1.9" stroke-dasharray="7.5 4.4" fill="none"/></svg>
<div class="t s" style="left:1511.30px;top:1422.53px;font-size:29px;color:#8f8d92;letter-spacing:0.4px;">16</div>
<div class="t s" style="left:1647.60px;top:1458.03px;font-size:33px;color:#38363c;letter-spacing:0.58px;">mysql</div>
<div class="t m" style="left:2023.20px;top:1457.84px;font-size:34.5px;color:#3a383e;letter-spacing:-1.25px;line-height:38px;margin-top:-1.75px;-webkit-text-stroke:0.3px;">mbind: Operation not permitted</div>
<div class="a" style="left:814.00px;top:1740.02px;width:1800.00px;height:1.70px;background:#dcdbe0;"></div>
<div class="a" style="left:834.00px;top:1589.75px;width:16.20px;height:124.20px;background:#ecb258;border-radius:5px;"></div>
<div class="t s" style="left:908.00px;top:1636.00px;font-size:33px;color:#38363c;letter-spacing:-0.95px;">147</div>
<div class="a" style="left:982.00px;top:1627.85px;width:149.80px;height:50.00px;background:#e8e8eb;"></div>
<div class="a" style="left:982.00px;top:1627.85px;width:6.00px;height:50.00px;background:#ecb258;"></div>
<svg style="left:0;top:0" width="1700" height="2622" viewBox="0 0 1700 2622"><g shape-rendering="crispEdges"><rect x="1258" y="1623.45" width="19.8" height="65.40" fill="#ecb258"/><rect x="1283" y="1619.05" width="19.8" height="69.80" fill="#ecb258"/><rect x="1308" y="1614.75" width="19.8" height="74.10" fill="#ecb258"/><rect x="1333" y="1619.05" width="19.8" height="69.80" fill="#ecb258"/><rect x="1358" y="1623.45" width="19.8" height="65.40" fill="#ecb258"/><rect x="1383" y="1614.75" width="19.8" height="74.10" fill="#ecb258"/><rect x="1408" y="1623.45" width="19.8" height="65.40" fill="#ecb258"/><rect x="1433" y="1614.75" width="19.8" height="74.10" fill="#ecb258"/><rect x="1458" y="1623.45" width="19.8" height="65.40" fill="#ecb258"/><rect x="1483" y="1628.35" width="19.8" height="60.50" fill="#ecb258"/><rect x="1258" y="1688.25" width="250" height="2" fill="#8f8d92"/></g><path d="M1308 1614.35H1508" stroke="#8f8d92" stroke-width="1.9" stroke-dasharray="7.5 4.4" fill="none"/></svg>
<div class="t s" style="left:1511.30px;top:1600.10px;font-size:29px;color:#8f8d92;letter-spacing:0.4px;">16</div>
<div class="t s" style="left:1647.60px;top:1635.60px;font-size:33px;color:#38363c;letter-spacing:0.58px;">fse-auto-process</div>
<div class="t m" style="left:2023.20px;top:1635.41px;font-size:34.5px;color:#3a383e;letter-spacing:-1.25px;line-height:38px;margin-top:-1.75px;-webkit-text-stroke:0.3px;">GET /pass/beanserver/payment/</div>
<div class="a" style="left:814.00px;top:1917.59px;width:1800.00px;height:1.70px;background:#dcdbe0;"></div>
<div class="a" style="left:834.00px;top:1767.32px;width:16.20px;height:124.20px;background:#9aaabb;border-radius:5px;"></div>
<div class="t s" style="left:908.00px;top:1813.57px;font-size:33px;color:#38363c;letter-spacing:-0.95px;">96</div>
<div class="a" style="left:964.30px;top:1805.42px;width:149.80px;height:50.00px;background:#e8e8eb;"></div>
<div class="a" style="left:964.30px;top:1805.42px;width:3.20px;height:50.00px;background:#9aaabb;"></div>
<svg style="left:0;top:0" width="1700" height="2622" viewBox="0 0 1700 2622"><g shape-rendering="crispEdges"><rect x="1258" y="1806.72" width="19.8" height="59.70" fill="#9aaabb"/><rect x="1283" y="1790.52" width="19.8" height="75.90" fill="#9aaabb"/><rect x="1308" y="1812.42" width="19.8" height="54.00" fill="#9aaabb"/><rect x="1333" y="1823.02" width="19.8" height="43.40" fill="#9aaabb"/><rect x="1358" y="1823.02" width="19.8" height="43.40" fill="#9aaabb"/><rect x="1383" y="1817.72" width="19.8" height="48.70" fill="#9aaabb"/><rect x="1408" y="1839.22" width="19.8" height="27.20" fill="#9aaabb"/><rect x="1433" y="1806.72" width="19.8" height="59.70" fill="#9aaabb"/><rect x="1458" y="1796.22" width="19.8" height="70.20" fill="#9aaabb"/><rect x="1483" y="1828.22" width="19.8" height="38.20" fill="#9aaabb"/><rect x="1258" y="1865.82" width="250" height="2" fill="#8f8d92"/></g><path d="M1283 1790.12H1508" stroke="#8f8d92" stroke-width="1.9" stroke-dasharray="7.5 4.4" fill="none"/></svg>
<div class="t s" style="left:1511.30px;top:1775.87px;font-size:29px;color:#8f8d92;letter-spacing:0.4px;">14</div>
<div class="t s" style="left:1647.60px;top:1813.17px;font-size:33px;color:#38363c;letter-spacing:1.0px;">firelens-test</div>
<div class="a" style="left:2335.40px;top:1809.62px;width:233.40px;height:38.00px;background:#fdecd0;"></div>
<div class="t m" style="left:2023.20px;top:1812.98px;font-size:34.5px;color:#3a383e;letter-spacing:-1.25px;line-height:38px;margin-top:-1.75px;-webkit-text-stroke:0.3px;">1:M 25 Sep 2019 HH:mm:ss.SSS</div>
<div class="a" style="left:814.00px;top:2095.16px;width:1800.00px;height:1.70px;background:#dcdbe0;"></div>
<div class="a" style="left:834.00px;top:1944.89px;width:16.20px;height:124.20px;background:#ecb258;border-radius:5px;"></div>
<div class="t s" style="left:908.00px;top:1991.14px;font-size:33px;color:#38363c;letter-spacing:-0.95px;">86</div>
<div class="a" style="left:964.30px;top:1982.99px;width:149.80px;height:50.00px;background:#e8e8eb;"></div>
<div class="a" style="left:964.30px;top:1982.99px;width:3.20px;height:50.00px;background:#ecb258;"></div>
<svg style="left:0;top:0" width="1700" height="2622" viewBox="0 0 1700 2622"><g shape-rendering="crispEdges"><rect x="1258" y="1986.99" width="19.8" height="57.00" fill="#ecb258"/><rect x="1283" y="1968.09" width="19.8" height="75.90" fill="#ecb258"/><rect x="1308" y="1974.19" width="19.8" height="69.80" fill="#ecb258"/><rect x="1333" y="1968.09" width="19.8" height="75.90" fill="#ecb258"/><rect x="1358" y="2018.59" width="19.8" height="25.40" fill="#ecb258"/><rect x="1383" y="1980.79" width="19.8" height="63.20" fill="#ecb258"/><rect x="1408" y="1980.79" width="19.8" height="63.20" fill="#ecb258"/><rect x="1433" y="2005.79" width="19.8" height="38.20" fill="#ecb258"/><rect x="1458" y="1993.49" width="19.8" height="50.50" fill="#ecb258"/><rect x="1483" y="2018.59" width="19.8" height="25.40" fill="#ecb258"/><rect x="1258" y="2043.39" width="250" height="2" fill="#8f8d92"/></g><path d="M1283 1967.69H1508" stroke="#8f8d92" stroke-width="1.9" stroke-dasharray="7.5 4.4" fill="none"/></svg>
<div class="t s" style="left:1511.30px;top:1953.44px;font-size:29px;color:#8f8d92;letter-spacing:0.4px;">12</div>
<div class="t s" style="left:1647.60px;top:1990.74px;font-size:33px;color:#38363c;letter-spacing:1.0px;">firelens-test</div>
<div class="a" style="left:2335.40px;top:1987.19px;width:233.40px;height:38.00px;background:#fdecd0;"></div>
<div class="t m" style="left:2023.20px;top:1990.55px;font-size:34.5px;color:#3a383e;letter-spacing:-1.25px;line-height:38px;margin-top:-1.75px;-webkit-text-stroke:0.3px;">1:M 25 Sep 2019 HH:mm:ss.SSS</div>
<div class="a" style="left:814.00px;top:2272.73px;width:1800.00px;height:1.70px;background:#dcdbe0;"></div>
<div class="a" style="left:834.00px;top:2122.46px;width:16.20px;height:124.20px;background:#9aaabb;border-radius:5px;"></div>
<div class="t s" style="left:908.00px;top:2168.71px;font-size:33px;color:#38363c;letter-spacing:-0.95px;">82</div>
<div class="a" style="left:964.30px;top:2160.56px;width:149.80px;height:50.00px;background:#e8e8eb;"></div>
<div class="a" style="left:964.30px;top:2160.56px;width:3.20px;height:50.00px;background:#9aaabb;"></div>
<svg style="left:0;top:0" width="1700" height="2622" viewBox="0 0 1700 2622"><g shape-rendering="crispEdges"><rect x="1258" y="2159.56" width="19.8" height="62.00" fill="#9aaabb"/><rect x="1283" y="2171.86" width="19.8" height="49.70" fill="#9aaabb"/><rect x="1308" y="2178.26" width="19.8" height="43.30" fill="#9aaabb"/><rect x="1333" y="2178.26" width="19.8" height="43.30" fill="#9aaabb"/><rect x="1358" y="2178.26" width="19.8" height="43.30" fill="#9aaabb"/><rect x="1383" y="2178.26" width="19.8" height="43.30" fill="#9aaabb"/><rect x="1408" y="2178.26" width="19.8" height="43.30" fill="#9aaabb"/><rect x="1433" y="2146.86" width="19.8" height="74.70" fill="#9aaabb"/><rect x="1458" y="2165.86" width="19.8" height="55.70" fill="#9aaabb"/><rect x="1483" y="2171.86" width="19.8" height="49.70" fill="#9aaabb"/><rect x="1258" y="2220.96" width="250" height="2" fill="#8f8d92"/></g><path d="M1433 2146.46H1508" stroke="#8f8d92" stroke-width="1.9" stroke-dasharray="7.5 4.4" fill="none"/></svg>
<div class="t s" style="left:1511.30px;top:2132.21px;font-size:29px;color:#8f8d92;letter-spacing:0.4px;">12</div>
<div class="t s" style="left:1647.60px;top:2168.31px;font-size:33px;color:#38363c;letter-spacing:1.0px;">firelens-test</div>
<div class="a" style="left:2335.40px;top:2164.76px;width:233.40px;height:38.00px;background:#fdecd0;"></div>
<div class="t m" style="left:2023.20px;top:2168.12px;font-size:34.5px;color:#3a383e;letter-spacing:-1.25px;line-height:38px;margin-top:-1.75px;-webkit-text-stroke:0.3px;">1:M 25 Sep 2019 HH:mm:ss.SSS</div>
<div class="a" style="left:814.00px;top:2450.30px;width:1800.00px;height:1.70px;background:#dcdbe0;"></div>
<div class="a" style="left:834.00px;top:2300.03px;width:16.20px;height:124.20px;background:#ecb258;border-radius:5px;"></div>
<div class="t s" style="left:908.00px;top:2346.28px;font-size:33px;color:#38363c;letter-spacing:-0.95px;">82</div>
<div class="a" style="left:964.30px;top:2338.13px;width:149.80px;height:50.00px;background:#e8e8eb;"></div>
<div class="a" style="left:964.30px;top:2338.13px;width:3.20px;height:50.00px;background:#ecb258;"></div>
<svg style="left:0;top:0" width="1700" height="2622" viewBox="0 0 1700 2622"><g shape-rendering="crispEdges"><rect x="1258" y="2388.13" width="19.8" height="11.00" fill="#ecb258"/><rect x="1283" y="2359.13" width="19.8" height="40.00" fill="#ecb258"/><rect x="1308" y="2359.13" width="19.8" height="40.00" fill="#ecb258"/><rect x="1333" y="2353.43" width="19.8" height="45.70" fill="#ecb258"/><rect x="1358" y="2325.13" width="19.8" height="74.00" fill="#ecb258"/><rect x="1383" y="2347.83" width="19.8" height="51.30" fill="#ecb258"/><rect x="1408" y="2359.13" width="19.8" height="40.00" fill="#ecb258"/><rect x="1433" y="2353.43" width="19.8" height="45.70" fill="#ecb258"/><rect x="1458" y="2325.13" width="19.8" height="74.00" fill="#ecb258"/><rect x="1483" y="2353.43" width="19.8" height="45.70" fill="#ecb258"/><rect x="1258" y="2398.53" width="250" height="2" fill="#8f8d92"/></g><path d="M1358 2324.73H1508" stroke="#8f8d92" stroke-width="1.9" stroke-dasharray="7.5 4.4" fill="none"/></svg>
<div class="t s" style="left:1511.30px;top:2310.48px;font-size:29px;color:#8f8d92;letter-spacing:0.4px;">13</div>
<div class="t s" style="left:1647.60px;top:2345.88px;font-size:33px;color:#38363c;letter-spacing:1.0px;">firelens-test</div>
<div class="a" style="left:2335.40px;top:2342.33px;width:233.40px;height:38.00px;background:#fdecd0;"></div>
<div class="t m" style="left:2023.20px;top:2345.69px;font-size:34.5px;color:#3a383e;letter-spacing:-1.25px;line-height:38px;margin-top:-1.75px;-webkit-text-stroke:0.3px;">1:M 25 Sep 2019 HH:mm:ss.SSS</div>
<div class="a" style="left:814.00px;top:2627.87px;width:1800.00px;height:1.70px;background:#dcdbe0;"></div>
<div class="a" style="left:834.00px;top:2477.60px;width:16.20px;height:124.20px;background:#9aaabb;border-radius:5px;"></div>
<div class="t s" style="left:908.00px;top:2523.85px;font-size:33px;color:#38363c;letter-spacing:-0.95px;">78</div>
<div class="a" style="left:964.30px;top:2515.70px;width:149.80px;height:50.00px;background:#e8e8eb;"></div>
<div class="a" style="left:964.30px;top:2515.70px;width:3.20px;height:50.00px;background:#9aaabb;"></div>
<svg style="left:0;top:0" width="1700" height="2622" viewBox="0 0 1700 2622"><g shape-rendering="crispEdges"><rect x="1258" y="2524.40" width="19.8" height="52.30" fill="#9aaabb"/><rect x="1283" y="2541.70" width="19.8" height="35.00" fill="#9aaabb"/><rect x="1308" y="2541.70" width="19.8" height="35.00" fill="#9aaabb"/><rect x="1333" y="2530.00" width="19.8" height="46.70" fill="#9aaabb"/><rect x="1358" y="2501.00" width="19.8" height="75.70" fill="#9aaabb"/><rect x="1383" y="2530.00" width="19.8" height="46.70" fill="#9aaabb"/><rect x="1408" y="2518.40" width="19.8" height="58.30" fill="#9aaabb"/><rect x="1433" y="2553.40" width="19.8" height="23.30" fill="#9aaabb"/><rect x="1458" y="2530.00" width="19.8" height="46.70" fill="#9aaabb"/><rect x="1483" y="2541.70" width="19.8" height="35.00" fill="#9aaabb"/><rect x="1258" y="2576.10" width="250" height="2" fill="#8f8d92"/></g><path d="M1358 2500.60H1508" stroke="#8f8d92" stroke-width="1.9" stroke-dasharray="7.5 4.4" fill="none"/></svg>
<div class="t s" style="left:1511.30px;top:2486.35px;font-size:29px;color:#8f8d92;letter-spacing:0.4px;">13</div>
<div class="t s" style="left:1647.60px;top:2523.45px;font-size:33px;color:#38363c;letter-spacing:1.0px;">firelens-test</div>
<div class="a" style="left:2335.40px;top:2519.90px;width:233.40px;height:38.00px;background:#fdecd0;"></div>
<div class="t m" style="left:2023.20px;top:2523.26px;font-size:34.5px;color:#3a383e;letter-spacing:-1.25px;line-height:38px;margin-top:-1.75px;-webkit-text-stroke:0.3px;">1:M 25 Sep 2019 HH:mm:ss.SSS</div>
<div class="a" style="left:2526px;top:0;width:1291px;height:2622px;background:#fff;box-shadow:-10px 0 56px rgba(0,0,0,0.30), -2px 0 12px rgba(0,0,0,0.17)"></div>
<div class="a" style="left:2526.00px;top:0.00px;width:1291.00px;height:11.60px;background:#e1e0e5;"></div>
<div class="a" style="left:2526.00px;top:123.60px;width:1291.00px;height:1.60px;background:#dcdbe0;"></div>
<div class="t s" style="left:2565.40px;top:174.40px;font-size:30px;color:#38363c;font-weight:700;letter-spacing:-0.6px;">PATTERN</div>
<div class="a" style="left:2566.3px;top:230px;width:1400px;height:102px;background:#f5f5f6;border:6px solid #e9e9ec"></div>
<div class="a" style="left:2667.96px;top:260.20px;width:235.48px;height:37.80px;background:#fdecd0;"></div>
<div class="t m" style="left:2590.20px;top:263.08px;font-size:34.6px;color:#4a484e;letter-spacing:-1.17px;line-height:38px;margin-top:-1.7px;-webkit-text-stroke:0.3px;">GET /pass/<span style="position:relative;top:6.5px">*</span>/-<span style="position:relative;top:6.5px">*</span><span style="position:relative;top:6.5px">*</span>- HTTP/1.1</div>
<div class="t s" style="left:2565.40px;top:380.20px;font-size:30px;color:#38363c;font-weight:700;letter-spacing:-1.4px;">EVENTS SAMPLES</div>
<div class="t s" style="left:2564.60px;top:443.68px;font-size:31.2px;color:#111;">Showing <b>50</b> events out of <b>872</b></div>
<div class="a" style="left:2566.4px;top:500.2px;width:1400px;height:2300px;border:2px solid #dcdbe0;border-radius:5px 0 0 0;background:#fff"></div>
<div class="t s" style="left:2663.40px;top:522.10px;font-size:30px;color:#000;font-weight:700;letter-spacing:-1.25px;">DATE</div>
<svg style="left:0;top:0" width="2800" height="600" viewBox="0 0 2800 600"><path d="M2761.6 525.2V546M2755.2 540L2761.6 546.6L2768 540" fill="none" stroke="#000" stroke-width="2.6"/></svg>
<div class="t s" style="left:3006.60px;top:522.10px;font-size:30px;color:#000;font-weight:700;letter-spacing:-0.55px;">CONTENT</div>
<div class="a" style="left:2568.40px;top:569.70px;width:1400.00px;height:2.00px;background:#dcdbe0;"></div>
<div class="a" style="left:2568.4px;top:622.60px;width:1400px;height:1.7px;background:#dedde2"></div><div class="a" style="left:2588px;top:577.80px;width:12px;height:40px;background:#97dca0;border-radius:6px"></div><div class="t m" style="left:2627.4px;top:581.47px;font-size:32.0px;color:#000;letter-spacing:-1.2px;word-spacing:-6px;-webkit-text-stroke:0.35px #000">Sep 25 15:44:13.000</div><div class="t m" style="left:2993.2px;top:581.47px;font-size:32.0px;color:#000;letter-spacing:-1.2px;-webkit-text-stroke:0.35px">GET<span style="margin-left:12px;color:#3399cc">/pass/welcome</span><span style="margin-left:23.4px">HTTP/</span><span style="color:#2fb75d;margin-left:2.2px">1.1</span></div><svg style="left:0;top:0" width="3000" height="2622" viewBox="0 0 3000 2622"><path d="M2966.4 590.60L2981.6 597.60L2966.4 604.60" fill="none" stroke="#dedde2" stroke-width="2.4"/></svg><div class="a" style="left:2568.4px;top:674.60px;width:1400px;height:1.7px;background:#dedde2"></div><div class="a" style="left:2588px;top:629.80px;width:12px;height:40px;background:#97dca0;border-radius:6px"></div><div class="t m" style="left:2627.4px;top:633.47px;font-size:32.0px;color:#000;letter-spacing:-1.2px;word-spacing:-6px;-webkit-text-stroke:0.35px #000">Sep 25 15:44:02.000</div><div class="t m" style="left:2993.2px;top:633.47px;font-size:32.0px;color:#000;letter-spacing:-1.2px;-webkit-text-stroke:0.35px">GET<span style="margin-left:12px;color:#3399cc">/pass/beanserver/order/6980</span><span style="margin-left:23.4px">HTTP/</span><span style="color:#2fb75d;margin-left:2.2px">1.1</span></div><svg style="left:0;top:0" width="3000" height="2622" viewBox="0 0 3000 2622"><path d="M2966.4 642.60L2981.6 649.60L2966.4 656.60" fill="none" stroke="#dedde2" stroke-width="2.4"/></svg><div class="a" style="left:2568.4px;top:726.60px;width:1400px;height:1.7px;background:#dedde2"></div><div class="a" style="left:2588px;top:681.80px;width:12px;height:40px;background:#97dca0;border-radius:6px"></div><div class="t m" style="left:2627.4px;top:685.47px;font-size:32.0px;color:#000;letter-spacing:-1.2px;word-spacing:-6px;-webkit-text-stroke:0.35px #000">Sep 25 15:43:55.000</div><div class="t m" style="left:2993.2px;top:685.47px;font-size:32.0px;color:#000;letter-spacing:-1.2px;-webkit-text-stroke:0.35px">GET<span style="margin-left:12px;color:#3399cc">/pass/beanserver/order/9994</span><span style="margin-left:23.4px">HTTP/</span><span style="color:#2fb75d;margin-left:2.2px">1.1</span></div><svg style="left:0;top:0" width="3000" height="2622" viewBox="0 0 3000 2622"><path d="M2966.4 694.60L2981.6 701.60L2966.4 708.60" fill="none" stroke="#dedde2" stroke-width="2.4"/></svg><div class="a" style="left:2568.4px;top:778.60px;width:1400px;height:1.7px;background:#dedde2"></div><div class="a" style="left:2588px;top:733.80px;width:12px;height:40px;background:#97dca0;border-radius:6px"></div><div class="t m" style="left:2627.4px;top:737.47px;font-size:32.0px;color:#000;letter-spacing:-1.2px;word-spacing:-6px;-webkit-text-stroke:0.35px #000">Sep 25 15:43:49.000</div><div class="t m" style="left:2993.2px;top:737.47px;font-size:32.0px;color:#000;letter-spacing:-1.2px;-webkit-text-stroke:0.35px">GET<span style="margin-left:12px;color:#3399cc">/pass/beanserver/order/6948</span><span style="margin-left:23.4px">HTTP/</span><span style="color:#2fb75d;margin-left:2.2px">1.1</span></div><svg style="left:0;top:0" width="3000" height="2622" viewBox="0 0 3000 2622"><path d="M2966.4 746.60L2981.6 753.60L2966.4 760.60" fill="none" stroke="#dedde2" stroke-width="2.4"/></svg><div class="a" style="left:2568.4px;top:830.60px;width:1400px;height:1.7px;background:#dedde2"></div><div class="a" style="left:2588px;top:785.80px;width:12px;height:40px;background:#97dca0;border-radius:6px"></div><div class="t m" style="left:2627.4px;top:789.47px;font-size:32.0px;color:#000;letter-spacing:-1.2px;word-spacing:-6px;-webkit-text-stroke:0.35px #000">Sep 25 15:43:31.000</div><div class="t m" style="left:2993.2px;top:789.47px;font-size:32.0px;color:#000;letter-spacing:-1.2px;-webkit-text-stroke:0.35px">GET<span style="margin-left:12px;color:#3399cc">/pass/beanserver/order/5048</span><span style="margin-left:23.4px">HTTP/</span><span style="color:#2fb75d;margin-left:2.2px">1.1</span></div><svg style="left:0;top:0" width="3000" height="2622" viewBox="0 0 3000 2622"><path d="M2966.4 798.60L2981.6 805.60L2966.4 812.60" fill="none" stroke="#dedde2" stroke-width="2.4"/></svg><div class="a" style="left:2568.4px;top:882.60px;width:1400px;height:1.7px;background:#dedde2"></div><div class="a" style="left:2588px;top:837.80px;width:12px;height:40px;background:#97dca0;border-radius:6px"></div><div class="t m" style="left:2627.4px;top:841.47px;font-size:32.0px;color:#000;letter-spacing:-1.2px;word-spacing:-6px;-webkit-text-stroke:0.35px #000">Sep 25 15:43:13.000</div><div class="t m" style="left:2993.2px;top:841.47px;font-size:32.0px;color:#000;letter-spacing:-1.2px;-webkit-text-stroke:0.35px">GET<span style="margin-left:12px;color:#3399cc">/pass/welcome</span><span style="margin-left:23.4px">HTTP/</span><span style="color:#2fb75d;margin-left:2.2px">1.1</span></div><svg style="left:0;top:0" width="3000" height="2622" viewBox="0 0 3000 2622"><path d="M2966.4 850.60L2981.6 857.60L2966.4 864.60" fill="none" stroke="#dedde2" stroke-width="2.4"/></svg><div class="a" style="left:2568.4px;top:934.60px;width:1400px;height:1.7px;background:#dedde2"></div><div class="a" style="left:2588px;top:889.80px;width:12px;height:40px;background:#97dca0;border-radius:6px"></div><div class="t m" style="left:2627.4px;top:893.47px;font-size:32.0px;color:#000;letter-spacing:-1.2px;word-spacing:-6px;-webkit-text-stroke:0.35px #000">Sep 25 15:43:08.000</div><div class="t m" style="left:2993.2px;top:893.47px;font-size:32.0px;color:#000;letter-spacing:-1.2px;-webkit-text-stroke:0.35px">GET<span style="margin-left:12px;color:#3399cc">/pass/beanserver/refund/9125</span><span style="margin-left:23.4px">HTTP/</span><span style="color:#2fb75d;margin-left:2.2px">1.1</span></div><svg style="left:0;top:0" width="3000" height="2622" viewBox="0 0 3000 2622"><path d="M2966.4 902.60L2981.6 909.60L2966.4 916.60" fill="none" stroke="#dedde2" stroke-width="2.4"/></svg><div class="a" style="left:2568.4px;top:986.60px;width:1400px;height:1.7px;background:#dedde2"></div><div class="a" style="left:2588px;top:941.80px;width:12px;height:40px;background:#97dca0;border-radius:6px"></div><div class="t m" style="left:2627.4px;top:945.47px;font-size:32.0px;color:#000;letter-spacing:-1.2px;word-spacing:-6px;-webkit-text-stroke:0.35px #000">Sep 25 15:42:50.000</div><div class="t m" style="left:2993.2px;top:945.47px;font-size:32.0px;color:#000;letter-spacing:-1.2px;-webkit-text-stroke:0.35px">GET<span style="margin-left:12px;color:#3399cc">/pass/beanserver/order/1889</span><span style="margin-left:23.4px">HTTP/</span><span style="color:#2fb75d;margin-left:2.2px">1.1</span></div><svg style="left:0;top:0" width="3000" height="2622" viewBox="0 0 3000 2622"><path d="M2966.4 954.60L2981.6 961.60L2966.4 968.60" fill="none" stroke="#dedde2" stroke-width="2.4"/></svg><div class="a" style="left:2568.4px;top:1038.60px;width:1400px;height:1.7px;background:#dedde2"></div><div class="a" style="left:2588px;top:993.80px;width:12px;height:40px;background:#97dca0;border-radius:6px"></div><div class="t m" style="left:2627.4px;top:997.47px;font-size:32.0px;color:#000;letter-spacing:-1.2px;word-spacing:-6px;-webkit-text-stroke:0.35px #000">Sep 25 15:42:49.000</div><div class="t m" style="left:2993.2px;top:997.47px;font-size:32.0px;color:#000;letter-spacing:-1.2px;-webkit-text-stroke:0.35px">GET<span style="margin-left:12px;color:#3399cc">/pass/welcome</span><span style="margin-left:23.4px">HTTP/</span><span style="color:#2fb75d;margin-left:2.2px">1.1</span></div><svg style="left:0;top:0" width="3000" height="2622" viewBox="0 0 3000 2622"><path d="M2966.4 1006.60L2981.6 1013.60L2966.4 1020.60" fill="none" stroke="#dedde2" stroke-width="2.4"/></svg><div class="a" style="left:2568.4px;top:1090.60px;width:1400px;height:1.7px;background:#dedde2"></div><div class="a" style="left:2588px;top:1045.80px;width:12px;height:40px;background:#97dca0;border-radius:6px"></div><div class="t m" style="left:2627.4px;top:1049.47px;font-size:32.0px;color:#000;letter-spacing:-1.2px;word-spacing:-6px;-webkit-text-stroke:0.35px #000">Sep 25 15:42:44.000</div><div class="t m" style="left:2993.2px;top:1049.47px;font-size:32.0px;color:#000;letter-spacing:-1.2px;-webkit-text-stroke:0.35px">GET<span style="margin-left:12px;color:#3399cc">/pass/beanserver/refund/8</span><span style="margin-left:23.4px">HTTP/</span><span style="color:#2fb75d;margin-left:2.2px">1.1</span></div><svg style="left:0;top:0" width="3000" height="2622" viewBox="0 0 3000 2622"><path d="M2966.4 1058.60L2981.6 1065.60L2966.4 1072.60" fill="none" stroke="#dedde2" stroke-width="2.4"/></svg><div class="a" style="left:2568.4px;top:1142.60px;width:1400px;height:1.7px;background:#dedde2"></div><div class="a" style="left:2588px;top:1097.80px;width:12px;height:40px;background:#97dca0;border-radius:6px"></div><div class="t m" style="left:2627.4px;top:1101.47px;font-size:32.0px;color:#000;letter-spacing:-1.2px;word-spacing:-6px;-webkit-text-stroke:0.35px #000">Sep 25 15:42:01.000</div><div class="t m" style="left:2993.2px;top:1101.47px;font-size:32.0px;color:#000;letter-spacing:-1.2px;-webkit-text-stroke:0.35px">GET<span style="margin-left:12px;color:#3399cc">/pass/beanserver/order/8687</span><span style="margin-left:23.4px">HTTP/</span><span style="color:#2fb75d;margin-left:2.2px">1.1</span></div><svg style="left:0;top:0" width="3000" height="2622" viewBox="0 0 3000 2622"><path d="M2966.4 1110.60L2981.6 1117.60L2966.4 1124.60" fill="none" stroke="#dedde2" stroke-width="2.4"/></svg><div class="a" style="left:2568.4px;top:1194.60px;width:1400px;height:1.7px;background:#dedde2"></div><div class="a" style="left:2588px;top:1149.80px;width:12px;height:40px;background:#97dca0;border-radius:6px"></div><div class="t m" style="left:2627.4px;top:1153.47px;font-size:32.0px;color:#000;letter-spacing:-1.2px;word-spacing:-6px;-webkit-text-stroke:0.35px #000">Sep 25 15:41:56.000</div><div class="t m" style="left:2993.2px;top:1153.47px;font-size:32.0px;color:#000;letter-spacing:-1.2px;-webkit-text-stroke:0.35px">GET<span style="margin-left:12px;color:#3399cc">/pass/beanserver/refund/7276</span><span style="margin-left:23.4px">HTTP/</span><span style="color:#2fb75d;margin-left:2.2px">1.1</span></div><svg style="left:0;top:0" width="3000" height="2622" viewBox="0 0 3000 2622"><path d="M2966.4 1162.60L2981.6 1169.60L2966.4 1176.60" fill="none" stroke="#dedde2" stroke-width="2.4"/></svg><div class="a" style="left:2568.4px;top:1246.60px;width:1400px;height:1.7px;background:#dedde2"></div><div class="a" style="left:2588px;top:1201.80px;width:12px;height:40px;background:#97dca0;border-radius:6px"></div><div class="t m" style="left:2627.4px;top:1205.47px;font-size:32.0px;color:#000;letter-spacing:-1.2px;word-spacing:-6px;-webkit-text-stroke:0.35px #000">Sep 25 15:41:26.000</div><div class="t m" style="left:2993.2px;top:1205.47px;font-size:32.0px;color:#000;letter-spacing:-1.2px;-webkit-text-stroke:0.35px">GET<span style="margin-left:12px;color:#3399cc">/pass/beanserver/order/1939</span><span style="margin-left:23.4px">HTTP/</span><span style="color:#2fb75d;margin-left:2.2px">1.1</span></div><svg style="left:0;top:0" width="3000" height="2622" viewBox="0 0 3000 2622"><path d="M2966.4 1214.60L2981.6 1221.60L2966.4 1228.60" fill="none" stroke="#dedde2" stroke-width="2.4"/></svg><div class="a" style="left:2568.4px;top:1298.60px;width:1400px;height:1.7px;background:#dedde2"></div><div class="a" style="left:2588px;top:1253.80px;width:12px;height:40px;background:#97dca0;border-radius:6px"></div><div class="t m" style="left:2627.4px;top:1257.47px;font-size:32.0px;color:#000;letter-spacing:-1.2px;word-spacing:-6px;-webkit-text-stroke:0.35px #000">Sep 25 15:41:20.000</div><div class="t m" style="left:2993.2px;top:1257.47px;font-size:32.0px;color:#000;letter-spacing:-1.2px;-webkit-text-stroke:0.35px">GET<span style="margin-left:12px;color:#3399cc">/pass/beanserver/payment/4870</span><span style="margin-left:23.4px">HTTP/</span><span style="color:#2fb75d;margin-left:2.2px">1.1</span></div><svg style="left:0;top:0" width="3000" height="2622" viewBox="0 0 3000 2622"><path d="M2966.4 1266.60L2981.6 1273.60L2966.4 1280.60" fill="none" stroke="#dedde2" stroke-width="2.4"/></svg><div class="a" style="left:2568.4px;top:1350.60px;width:1400px;height:1.7px;background:#dedde2"></div><div class="a" style="left:2588px;top:1305.80px;width:12px;height:40px;background:#97dca0;border-radius:6px"></div><div class="t m" style="left:2627.4px;top:1309.47px;font-size:32.0px;color:#000;letter-spacing:-1.2px;word-spacing:-6px;-webkit-text-stroke:0.35px #000">Sep 25 15:41:02.000</div><div class="t m" style="left:2993.2px;top:1309.47px;font-size:32.0px;color:#000;letter-spacing:-1.2px;-webkit-text-stroke:0.35px">GET<span style="margin-left:12px;color:#3399cc">/pass/beanserver/order/2510</span><span style="margin-left:23.4px">HTTP/</span><span style="color:#2fb75d;margin-left:2.2px">1.1</span></div><svg style="left:0;top:0" width="3000" height="2622" viewBox="0 0 3000 2622"><path d="M2966.4 1318.60L2981.6 1325.60L2966.4 1332.60" fill="none" stroke="#dedde2" stroke-width="2.4"/></svg><div class="a" style="left:2568.4px;top:1402.60px;width:1400px;height:1.7px;background:#dedde2"></div><div class="a" style="left:2588px;top:1357.80px;width:12px;height:40px;background:#97dca0;border-radius:6px"></div><div class="t m" style="left:2627.4px;top:1361.47px;font-size:32.0px;color:#000;letter-spacing:-1.2px;word-spacing:-6px;-webkit-text-stroke:0.35px #000">Sep 25 15:39:56.000</div><div class="t m" style="left:2993.2px;top:1361.47px;font-size:32.0px;color:#000;letter-spacing:-1.2px;-webkit-text-stroke:0.35px">GET<span style="margin-left:12px;color:#3399cc">/pass/beanserver/refund/3585</span><span style="margin-left:23.4px">HTTP/</span><span style="color:#2fb75d;margin-left:2.2px">1.1</span></div><svg style="left:0;top:0" width="3000" height="2622" viewBox="0 0 3000 2622"><path d="M2966.4 1370.60L2981.6 1377.60L2966.4 1384.60" fill="none" stroke="#dedde2" stroke-width="2.4"/></svg><div class="a" style="left:2568.4px;top:1454.60px;width:1400px;height:1.7px;background:#dedde2"></div><div class="a" style="left:2588px;top:1409.80px;width:12px;height:40px;background:#97dca0;border-radius:6px"></div><div class="t m" style="left:2627.4px;top:1413.47px;font-size:32.0px;color:#000;letter-spacing:-1.2px;word-spacing:-6px;-webkit-text-stroke:0.35px #000">Sep 25 15:39:55.000</div><div class="t m" style="left:2993.2px;top:1413.47px;font-size:32.0px;color:#000;letter-spacing:-1.2px;-webkit-text-stroke:0.35px">GET<span style="margin-left:12px;color:#3399cc">/pass/beanserver/order/6065</span><span style="margin-left:23.4px">HTTP/</span><span style="color:#2fb75d;margin-left:2.2px">1.1</span></div><svg style="left:0;top:0" width="3000" height="2622" viewBox="0 0 3000 2622"><path d="M2966.4 1422.60L2981.6 1429.60L2966.4 1436.60" fill="none" stroke="#dedde2" stroke-width="2.4"/></svg><div class="a" style="left:2568.4px;top:1506.60px;width:1400px;height:1.7px;background:#dedde2"></div><div class="a" style="left:2588px;top:1461.80px;width:12px;height:40px;background:#97dca0;border-radius:6px"></div><div class="t m" style="left:2627.4px;top:1465.47px;font-size:32.0px;color:#000;letter-spacing:-1.2px;word-spacing:-6px;-webkit-text-stroke:0.35px #000">Sep 25 15:39:32.000</div><div class="t m" style="left:2993.2px;top:1465.47px;font-size:32.0px;color:#000;letter-spacing:-1.2px;-webkit-text-stroke:0.35px">GET<span style="margin-left:12px;color:#3399cc">/pass/beanserver/payment/3853</span><span style="margin-left:23.4px">HTTP/</span><span style="color:#2fb75d;margin-left:2.2px">1.1</span></div><svg style="left:0;top:0" width="3000" height="2622" viewBox="0 0 3000 2622"><path d="M2966.4 1474.60L2981.6 1481.60L2966.4 1488.60" fill="none" stroke="#dedde2" stroke-width="2.4"/></svg><div class="a" style="left:2568.4px;top:1558.60px;width:1400px;height:1.7px;background:#dedde2"></div><div class="a" style="left:2588px;top:1513.80px;width:12px;height:40px;background:#97dca0;border-radius:6px"></div><div class="t m" style="left:2627.4px;top:1517.47px;font-size:32.0px;color:#000;letter-spacing:-1.2px;word-spacing:-6px;-webkit-text-stroke:0.35px #000">Sep 25 15:39:25.000</div><div class="t m" style="left:2993.2px;top:1517.47px;font-size:32.0px;color:#000;letter-spacing:-1.2px;-webkit-text-stroke:0.35px">GET<span style="margin-left:12px;color:#3399cc">/pass/welcome</span><span style="margin-left:23.4px">HTTP/</span><span style="color:#2fb75d;margin-left:2.2px">1.1</span></div><svg style="left:0;top:0" width="3000" height="2622" viewBox="0 0 3000 2622"><path d="M2966.4 1526.60L2981.6 1533.60L2966.4 1540.60" fill="none" stroke="#dedde2" stroke-width="2.4"/></svg><div class="a" style="left:2568.4px;top:1610.60px;width:1400px;height:1.7px;background:#dedde2"></div><div class="a" style="left:2588px;top:1565.80px;width:12px;height:40px;background:#97dca0;border-radius:6px"></div><div class="t m" style="left:2627.4px;top:1569.47px;font-size:32.0px;color:#000;letter-spacing:-1.2px;word-spacing:-6px;-webkit-text-stroke:0.35px #000">Sep 25 15:39:08.000</div><div class="t m" style="left:2993.2px;top:1569.47px;font-size:32.0px;color:#000;letter-spacing:-1.2px;-webkit-text-stroke:0.35px">GET<span style="margin-left:12px;color:#3399cc">/pass/beanserver/refund/8314</span><span style="margin-left:23.4px">HTTP/</span><span style="color:#2fb75d;margin-left:2.2px">1.1</span></div><svg style="left:0;top:0" width="3000" height="2622" viewBox="0 0 3000 2622"><path d="M2966.4 1578.60L2981.6 1585.60L2966.4 1592.60" fill="none" stroke="#dedde2" stroke-width="2.4"/></svg><div class="a" style="left:2568.4px;top:1662.60px;width:1400px;height:1.7px;background:#dedde2"></div><div class="a" style="left:2588px;top:1617.80px;width:12px;height:40px;background:#97dca0;border-radius:6px"></div><div class="t m" style="left:2627.4px;top:1621.47px;font-size:32.0px;color:#000;letter-spacing:-1.2px;word-spacing:-6px;-webkit-text-stroke:0.35px #000">Sep 25 15:38:37.000</div><div class="t m" style="left:2993.2px;top:1621.47px;font-size:32.0px;color:#000;letter-spacing:-1.2px;-webkit-text-stroke:0.35px">GET<span style="margin-left:12px;color:#3399cc">/pass/beanserver/order/9534</span><span style="margin-left:23.4px">HTTP/</span><span style="color:#2fb75d;margin-left:2.2px">1.1</span></div><svg style="left:0;top:0" width="3000" height="2622" viewBox="0 0 3000 2622"><path d="M2966.4 1630.60L2981.6 1637.60L2966.4 1644.60" fill="none" stroke="#dedde2" stroke-width="2.4"/></svg><div class="a" style="left:2568.4px;top:1714.60px;width:1400px;height:1.7px;background:#dedde2"></div><div class="a" style="left:2588px;top:1669.80px;width:12px;height:40px;background:#97dca0;border-radius:6px"></div><div class="t m" style="left:2627.4px;top:1673.47px;font-size:32.0px;color:#000;letter-spacing:-1.2px;word-spacing:-6px;-webkit-text-stroke:0.35px #000">Sep 25 15:38:14.000</div><div class="t m" style="left:2993.2px;top:1673.47px;font-size:32.0px;color:#000;letter-spacing:-1.2px;-webkit-text-stroke:0.35px">GET<span style="margin-left:12px;color:#3399cc">/pass/beanserver/refund/4056</span><span style="margin-left:23.4px">HTTP/</span><span style="color:#2fb75d;margin-left:2.2px">1.1</span></div><svg style="left:0;top:0" width="3000" height="2622" viewBox="0 0 3000 2622"><path d="M2966.4 1682.60L2981.6 1689.60L2966.4 1696.60" fill="none" stroke="#dedde2" stroke-width="2.4"/></svg><div class="a" style="left:2568.4px;top:1766.60px;width:1400px;height:1.7px;background:#dedde2"></div><div class="a" style="left:2588px;top:1721.80px;width:12px;height:40px;background:#97dca0;border-radius:6px"></div><div class="t m" style="left:2627.4px;top:1725.47px;font-size:32.0px;color:#000;letter-spacing:-1.2px;word-spacing:-6px;-webkit-text-stroke:0.35px #000">Sep 25 15:38:13.000</div><div class="t m" style="left:2993.2px;top:1725.47px;font-size:32.0px;color:#000;letter-spacing:-1.2px;-webkit-text-stroke:0.35px">GET<span style="margin-left:12px;color:#3399cc">/pass/welcome</span><span style="margin-left:23.4px">HTTP/</span><span style="color:#2fb75d;margin-left:2.2px">1.1</span></div><svg style="left:0;top:0" width="3000" height="2622" viewBox="0 0 3000 2622"><path d="M2966.4 1734.60L2981.6 1741.60L2966.4 1748.60" fill="none" stroke="#dedde2" stroke-width="2.4"/></svg><div class="a" style="left:2568.4px;top:1818.60px;width:1400px;height:1.7px;background:#dedde2"></div><div class="a" style="left:2588px;top:1773.80px;width:12px;height:40px;background:#97dca0;border-radius:6px"></div><div class="t m" style="left:2627.4px;top:1777.47px;font-size:32.0px;color:#000;letter-spacing:-1.2px;word-spacing:-6px;-webkit-text-stroke:0.35px #000">Sep 25 15:38:07.000</div><div class="t m" style="left:2993.2px;top:1777.47px;font-size:32.0px;color:#000;letter-spacing:-1.2px;-webkit-text-stroke:0.35px">GET<span style="margin-left:12px;color:#3399cc">/pass/welcome</span><span style="margin-left:23.4px">HTTP/</span><span style="color:#2fb75d;margin-left:2.2px">1.1</span></div><svg style="left:0;top:0" width="3000" height="2622" viewBox="0 0 3000 2622"><path d="M2966.4 1786.60L2981.6 1793.60L2966.4 1800.60" fill="none" stroke="#dedde2" stroke-width="2.4"/></svg><div class="a" style="left:2568.4px;top:1870.60px;width:1400px;height:1.7px;background:#dedde2"></div><div class="a" style="left:2588px;top:1825.80px;width:12px;height:40px;background:#97dca0;border-radius:6px"></div><div class="t m" style="left:2627.4px;top:1829.47px;font-size:32.0px;color:#000;letter-spacing:-1.2px;word-spacing:-6px;-webkit-text-stroke:0.35px #000">Sep 25 15:37:49.000</div><div class="t m" style="left:2993.2px;top:1829.47px;font-size:32.0px;color:#000;letter-spacing:-1.2px;-webkit-text-stroke:0.35px">GET<span style="margin-left:12px;color:#3399cc">/pass/welcome</span><span style="margin-left:23.4px">HTTP/</span><span style="color:#2fb75d;margin-left:2.2px">1.1</span></div><svg style="left:0;top:0" width="3000" height="2622" viewBox="0 0 3000 2622"><path d="M2966.4 1838.60L2981.6 1845.60L2966.4 1852.60" fill="none" stroke="#dedde2" stroke-width="2.4"/></svg><div class="a" style="left:2568.4px;top:1922.60px;width:1400px;height:1.7px;background:#dedde2"></div><div class="a" style="left:2588px;top:1877.80px;width:12px;height:40px;background:#97dca0;border-radius:6px"></div><div class="t m" style="left:2627.4px;top:1881.47px;font-size:32.0px;color:#000;letter-spacing:-1.2px;word-spacing:-6px;-webkit-text-stroke:0.35px #000">Sep 25 15:36:55.000</div><div class="t m" style="left:2993.2px;top:1881.47px;font-size:32.0px;color:#000;letter-spacing:-1.2px;-webkit-text-stroke:0.35px">GET<span style="margin-left:12px;color:#3399cc">/pass/beanserver/order/6261</span><span style="margin-left:23.4px">HTTP/</span><span style="color:#2fb75d;margin-left:2.2px">1.1</span></div><svg style="left:0;top:0" width="3000" height="2622" viewBox="0 0 3000 2622"><path d="M2966.4 1890.60L2981.6 1897.60L2966.4 1904.60" fill="none" stroke="#dedde2" stroke-width="2.4"/></svg><div class="a" style="left:2568.4px;top:1974.60px;width:1400px;height:1.7px;background:#dedde2"></div><div class="a" style="left:2588px;top:1929.80px;width:12px;height:40px;background:#97dca0;border-radius:6px"></div><div class="t m" style="left:2627.4px;top:1933.47px;font-size:32.0px;color:#000;letter-spacing:-1.2px;word-spacing:-6px;-webkit-text-stroke:0.35px #000">Sep 25 15:36:43.000</div><div class="t m" style="left:2993.2px;top:1933.47px;font-size:32.0px;color:#000;letter-spacing:-1.2px;-webkit-text-stroke:0.35px">GET<span style="margin-left:12px;color:#3399cc">/pass/beanserver/payment/9309</span><span style="margin-left:23.4px">HTTP/</span><span style="color:#2fb75d;margin-left:2.2px">1.1</span></div><svg style="left:0;top:0" width="3000" height="2622" viewBox="0 0 3000 2622"><path d="M2966.4 1942.60L2981.6 1949.60L2966.4 1956.60" fill="none" stroke="#dedde2" stroke-width="2.4"/></svg><div class="a" style="left:2568.4px;top:2026.60px;width:1400px;height:1.7px;background:#dedde2"></div><div class="a" style="left:2588px;top:1981.80px;width:12px;height:40px;background:#97dca0;border-radius:6px"></div><div class="t m" style="left:2627.4px;top:1985.47px;font-size:32.0px;color:#000;letter-spacing:-1.2px;word-spacing:-6px;-webkit-text-stroke:0.35px #000">Sep 25 15:36:30.000</div><div class="t m" style="left:2993.2px;top:1985.47px;font-size:32.0px;color:#000;letter-spacing:-1.2px;-webkit-text-stroke:0.35px">GET<span style="margin-left:12px;color:#3399cc">/pass/welcome</span><span style="margin-left:23.4px">HTTP/</span><span style="color:#2fb75d;margin-left:2.2px">1.1</span></div><svg style="left:0;top:0" width="3000" height="2622" viewBox="0 0 3000 2622"><path d="M2966.4 1994.60L2981.6 2001.60L2966.4 2008.60" fill="none" stroke="#dedde2" stroke-width="2.4"/></svg><div class="a" style="left:2568.4px;top:2078.60px;width:1400px;height:1.7px;background:#dedde2"></div><div class="a" style="left:2588px;top:2033.80px;width:12px;height:40px;background:#97dca0;border-radius:6px"></div><div class="t m" style="left:2627.4px;top:2037.47px;font-size:32.0px;color:#000;letter-spacing:-1.2px;word-spacing:-6px;-webkit-text-stroke:0.35px #000">Sep 25 15:36:19.000</div><div class="t m" style="left:2993.2px;top:2037.47px;font-size:32.0px;color:#000;letter-spacing:-1.2px;-webkit-text-stroke:0.35px">GET<span style="margin-left:12px;color:#3399cc">/pass/beanserver/order/5290</span><span style="margin-left:23.4px">HTTP/</span><span style="color:#2fb75d;margin-left:2.2px">1.1</span></div><svg style="left:0;top:0" width="3000" height="2622" viewBox="0 0 3000 2622"><path d="M2966.4 2046.60L2981.6 2053.60L2966.4 2060.60" fill="none" stroke="#dedde2" stroke-width="2.4"/></svg><div class="a" style="left:2568.4px;top:2130.60px;width:1400px;height:1.7px;background:#dedde2"></div><div class="a" style="left:2588px;top:2085.80px;width:12px;height:40px;background:#97dca0;border-radius:6px"></div><div class="t m" style="left:2627.4px;top:2089.47px;font-size:32.0px;color:#000;letter-spacing:-1.2px;word-spacing:-6px;-webkit-text-stroke:0.35px #000">Sep 25 15:36:07.000</div><div class="t m" style="left:2993.2px;top:2089.47px;font-size:32.0px;color:#000;letter-spacing:-1.2px;-webkit-text-stroke:0.35px">GET<span style="margin-left:12px;color:#3399cc">/pass/beanserver/payment/3492</span><span style="margin-left:23.4px">HTTP/</span><span style="color:#2fb75d;margin-left:2.2px">1.1</span></div><svg style="left:0;top:0" width="3000" height="2622" viewBox="0 0 3000 2622"><path d="M2966.4 2098.60L2981.6 2105.60L2966.4 2112.60" fill="none" stroke="#dedde2" stroke-width="2.4"/></svg><div class="a" style="left:2568.4px;top:2182.60px;width:1400px;height:1.7px;background:#dedde2"></div><div class="a" style="left:2588px;top:2137.80px;width:12px;height:40px;background:#97dca0;border-radius:6px"></div><div class="t m" style="left:2627.4px;top:2141.47px;font-size:32.0px;color:#000;letter-spacing:-1.2px;word-spacing:-6px;-webkit-text-stroke:0.35px #000">Sep 25 15:35:55.000</div><div class="t m" style="left:2993.2px;top:2141.47px;font-size:32.0px;color:#000;letter-spacing:-1.2px;-webkit-text-stroke:0.35px">GET<span style="margin-left:12px;color:#3399cc">/pass/beanserver/refund/739</span><span style="margin-left:23.4px">HTTP/</span><span style="color:#2fb75d;margin-left:2.2px">1.1</span></div><svg style="left:0;top:0" width="3000" height="2622" viewBox="0 0 3000 2622"><path d="M2966.4 2150.60L2981.6 2157.60L2966.4 2164.60" fill="none" stroke="#dedde2" stroke-width="2.4"/></svg><div class="a" style="left:2568.4px;top:2234.60px;width:1400px;height:1.7px;background:#dedde2"></div><div class="a" style="left:2588px;top:2189.80px;width:12px;height:40px;background:#97dca0;border-radius:6px"></div><div class="t m" style="left:2627.4px;top:2193.47px;font-size:32.0px;color:#000;letter-spacing:-1.2px;word-spacing:-6px;-webkit-text-stroke:0.35px #000">Sep 25 15:35:55.000</div><div class="t m" style="left:2993.2px;top:2193.47px;font-size:32.0px;color:#000;letter-spacing:-1.2px;-webkit-text-stroke:0.35px">GET<span style="margin-left:12px;color:#3399cc">/pass/beanserver/payment/4397</span><span style="margin-left:23.4px">HTTP/</span><span style="color:#2fb75d;margin-left:2.2px">1.1</span></div><svg style="left:0;top:0" width="3000" height="2622" viewBox="0 0 3000 2622"><path d="M2966.4 2202.60L2981.6 2209.60L2966.4 2216.60" fill="none" stroke="#dedde2" stroke-width="2.4"/></svg><div class="a" style="left:2568.4px;top:2286.60px;width:1400px;height:1.7px;background:#dedde2"></div><div class="a" style="left:2588px;top:2241.80px;width:12px;height:40px;background:#97dca0;border-radius:6px"></div><div class="t m" style="left:2627.4px;top:2245.47px;font-size:32.0px;color:#000;letter-spacing:-1.2px;word-spacing:-6px;-webkit-text-stroke:0.35px #000">Sep 25 15:35:13.000</div><div class="t m" style="left:2993.2px;top:2245.47px;font-size:32.0px;color:#000;letter-spacing:-1.2px;-webkit-text-stroke:0.35px">GET<span style="margin-left:12px;color:#3399cc">/pass/beanserver/payment/6089</span><span style="margin-left:23.4px">HTTP/</span><span style="color:#2fb75d;margin-left:2.2px">1.1</span></div><svg style="left:0;top:0" width="3000" height="2622" viewBox="0 0 3000 2622"><path d="M2966.4 2254.60L2981.6 2261.60L2966.4 2268.60" fill="none" stroke="#dedde2" stroke-width="2.4"/></svg><div class="a" style="left:2568.4px;top:2338.60px;width:1400px;height:1.7px;background:#dedde2"></div><div class="a" style="left:2588px;top:2293.80px;width:12px;height:40px;background:#97dca0;border-radius:6px"></div><div class="t m" style="left:2627.4px;top:2297.47px;font-size:32.0px;color:#000;letter-spacing:-1.2px;word-spacing:-6px;-webkit-text-stroke:0.35px #000">Sep 25 15:35:02.000</div><div class="t m" style="left:2993.2px;top:2297.47px;font-size:32.0px;color:#000;letter-spacing:-1.2px;-webkit-text-stroke:0.35px">GET<span style="margin-left:12px;color:#3399cc">/pass/beanserver/payment/2148</span><span style="margin-left:23.4px">HTTP/</span><span style="color:#2fb75d;margin-left:2.2px">1.1</span></div><svg style="left:0;top:0" width="3000" height="2622" viewBox="0 0 3000 2622"><path d="M2966.4 2306.60L2981.6 2313.60L2966.4 2320.60" fill="none" stroke="#dedde2" stroke-width="2.4"/></svg><div class="a" style="left:2568.4px;top:2390.60px;width:1400px;height:1.7px;background:#dedde2"></div><div class="a" style="left:2588px;top:2345.80px;width:12px;height:40px;background:#97dca0;border-radius:6px"></div><div class="t m" style="left:2627.4px;top:2349.47px;font-size:32.0px;color:#000;letter-spacing:-1.2px;word-spacing:-6px;-webkit-text-stroke:0.35px #000">Sep 25 15:34:37.000</div><div class="t m" style="left:2993.2px;top:2349.47px;font-size:32.0px;color:#000;letter-spacing:-1.2px;-webkit-text-stroke:0.35px">GET<span style="margin-left:12px;color:#3399cc">/pass/beanserver/order/3429</span><span style="margin-left:23.4px">HTTP/</span><span style="color:#2fb75d;margin-left:2.2px">1.1</span></div><svg style="left:0;top:0" width="3000" height="2622" viewBox="0 0 3000 2622"><path d="M2966.4 2358.60L2981.6 2365.60L2966.4 2372.60" fill="none" stroke="#dedde2" stroke-width="2.4"/></svg><div class="a" style="left:2568.4px;top:2442.60px;width:1400px;height:1.7px;background:#dedde2"></div><div class="a" style="left:2588px;top:2397.80px;width:12px;height:40px;background:#97dca0;border-radius:6px"></div><div class="t m" style="left:2627.4px;top:2401.47px;font-size:32.0px;color:#000;letter-spacing:-1.2px;word-spacing:-6px;-webkit-text-stroke:0.35px #000">Sep 25 15:33:32.000</div><div class="t m" style="left:2993.2px;top:2401.47px;font-size:32.0px;color:#000;letter-spacing:-1.2px;-webkit-text-stroke:0.35px">GET<span style="margin-left:12px;color:#3399cc">/pass/beanserver/order/3052</span><span style="margin-left:23.4px">HTTP/</span><span style="color:#2fb75d;margin-left:2.2px">1.1</span></div><svg style="left:0;top:0" width="3000" height="2622" viewBox="0 0 3000 2622"><path d="M2966.4 2410.60L2981.6 2417.60L2966.4 2424.60" fill="none" stroke="#dedde2" stroke-width="2.4"/></svg><div class="a" style="left:2568.4px;top:2494.60px;width:1400px;height:1.7px;background:#dedde2"></div><div class="a" style="left:2588px;top:2449.80px;width:12px;height:40px;background:#97dca0;border-radius:6px"></div><div class="t m" style="left:2627.4px;top:2453.47px;font-size:32.0px;color:#000;letter-spacing:-1.2px;word-spacing:-6px;-webkit-text-stroke:0.35px #000">Sep 25 15:33:31.000</div><div class="t m" style="left:2993.2px;top:2453.47px;font-size:32.0px;color:#000;letter-spacing:-1.2px;-webkit-text-stroke:0.35px">GET<span style="margin-left:12px;color:#3399cc">/pass/welcome</span><span style="margin-left:23.4px">HTTP/</span><span style="color:#2fb75d;margin-left:2.2px">1.1</span></div><svg style="left:0;top:0" width="3000" height="2622" viewBox="0 0 3000 2622"><path d="M2966.4 2462.60L2981.6 2469.60L2966.4 2476.60" fill="none" stroke="#dedde2" stroke-width="2.4"/></svg><div class="a" style="left:2568.4px;top:2546.60px;width:1400px;height:1.7px;background:#dedde2"></div><div class="a" style="left:2588px;top:2501.80px;width:12px;height:40px;background:#97dca0;border-radius:6px"></div><div class="t m" style="left:2627.4px;top:2505.47px;font-size:32.0px;color:#000;letter-spacing:-1.2px;word-spacing:-6px;-webkit-text-stroke:0.35px #000">Sep 25 15:33:26.000</div><div class="t m" style="left:2993.2px;top:2505.47px;font-size:32.0px;color:#000;letter-spacing:-1.2px;-webkit-text-stroke:0.35px">GET<span style="margin-left:12px;color:#3399cc">/pass/beanserver/order/2927</span><span style="margin-left:23.4px">HTTP/</span><span style="color:#2fb75d;margin-left:2.2px">1.1</span></div><svg style="left:0;top:0" width="3000" height="2622" viewBox="0 0 3000 2622"><path d="M2966.4 2514.60L2981.6 2521.60L2966.4 2528.60" fill="none" stroke="#dedde2" stroke-width="2.4"/></svg><div class="a" style="left:2568.4px;top:2598.60px;width:1400px;height:1.7px;background:#dedde2"></div><div class="a" style="left:2588px;top:2553.80px;width:12px;height:40px;background:#97dca0;border-radius:6px"></div><div class="t m" style="left:2627.4px;top:2557.47px;font-size:32.0px;color:#000;letter-spacing:-1.2px;word-spacing:-6px;-webkit-text-stroke:0.35px #000">Sep 25 15:33:02.000</div><div class="t m" style="left:2993.2px;top:2557.47px;font-size:32.0px;color:#000;letter-spacing:-1.2px;-webkit-text-stroke:0.35px">GET<span style="margin-left:12px;color:#3399cc">/pass/beanserver/order/2575</span><span style="margin-left:23.4px">HTTP/</span><span style="color:#2fb75d;margin-left:2.2px">1.1</span></div><svg style="left:0;top:0" width="3000" height="2622" viewBox="0 0 3000 2622"><path d="M2966.4 2566.60L2981.6 2573.60L2966.4 2580.60" fill="none" stroke="#dedde2" stroke-width="2.4"/></svg><div class="a" style="left:2568.4px;top:2650.60px;width:1400px;height:1.7px;background:#dedde2"></div><div class="a" style="left:2588px;top:2605.80px;width:12px;height:40px;background:#97dca0;border-radius:6px"></div><div class="t m" style="left:2627.4px;top:2609.47px;font-size:32.0px;color:#000;letter-spacing:-1.2px;word-spacing:-6px;-webkit-text-stroke:0.35px #000">Sep 25 15:32:44.000</div><div class="t m" style="left:2993.2px;top:2609.47px;font-size:32.0px;color:#000;letter-spacing:-1.2px;-webkit-text-stroke:0.35px">GET<span style="margin-left:12px;color:#3399cc">/pass/beanserver/payment/2973</span><span style="margin-left:23.4px">HTTP/</span><span style="color:#2fb75d;margin-left:2.2px">1.1</span></div><svg style="left:0;top:0" width="3000" height="2622" viewBox="0 0 3000 2622"><path d="M2966.4 2618.60L2981.6 2625.60L2966.4 2632.60" fill="none" stroke="#dedde2" stroke-width="2.4"/></svg>
</div></body></html>
